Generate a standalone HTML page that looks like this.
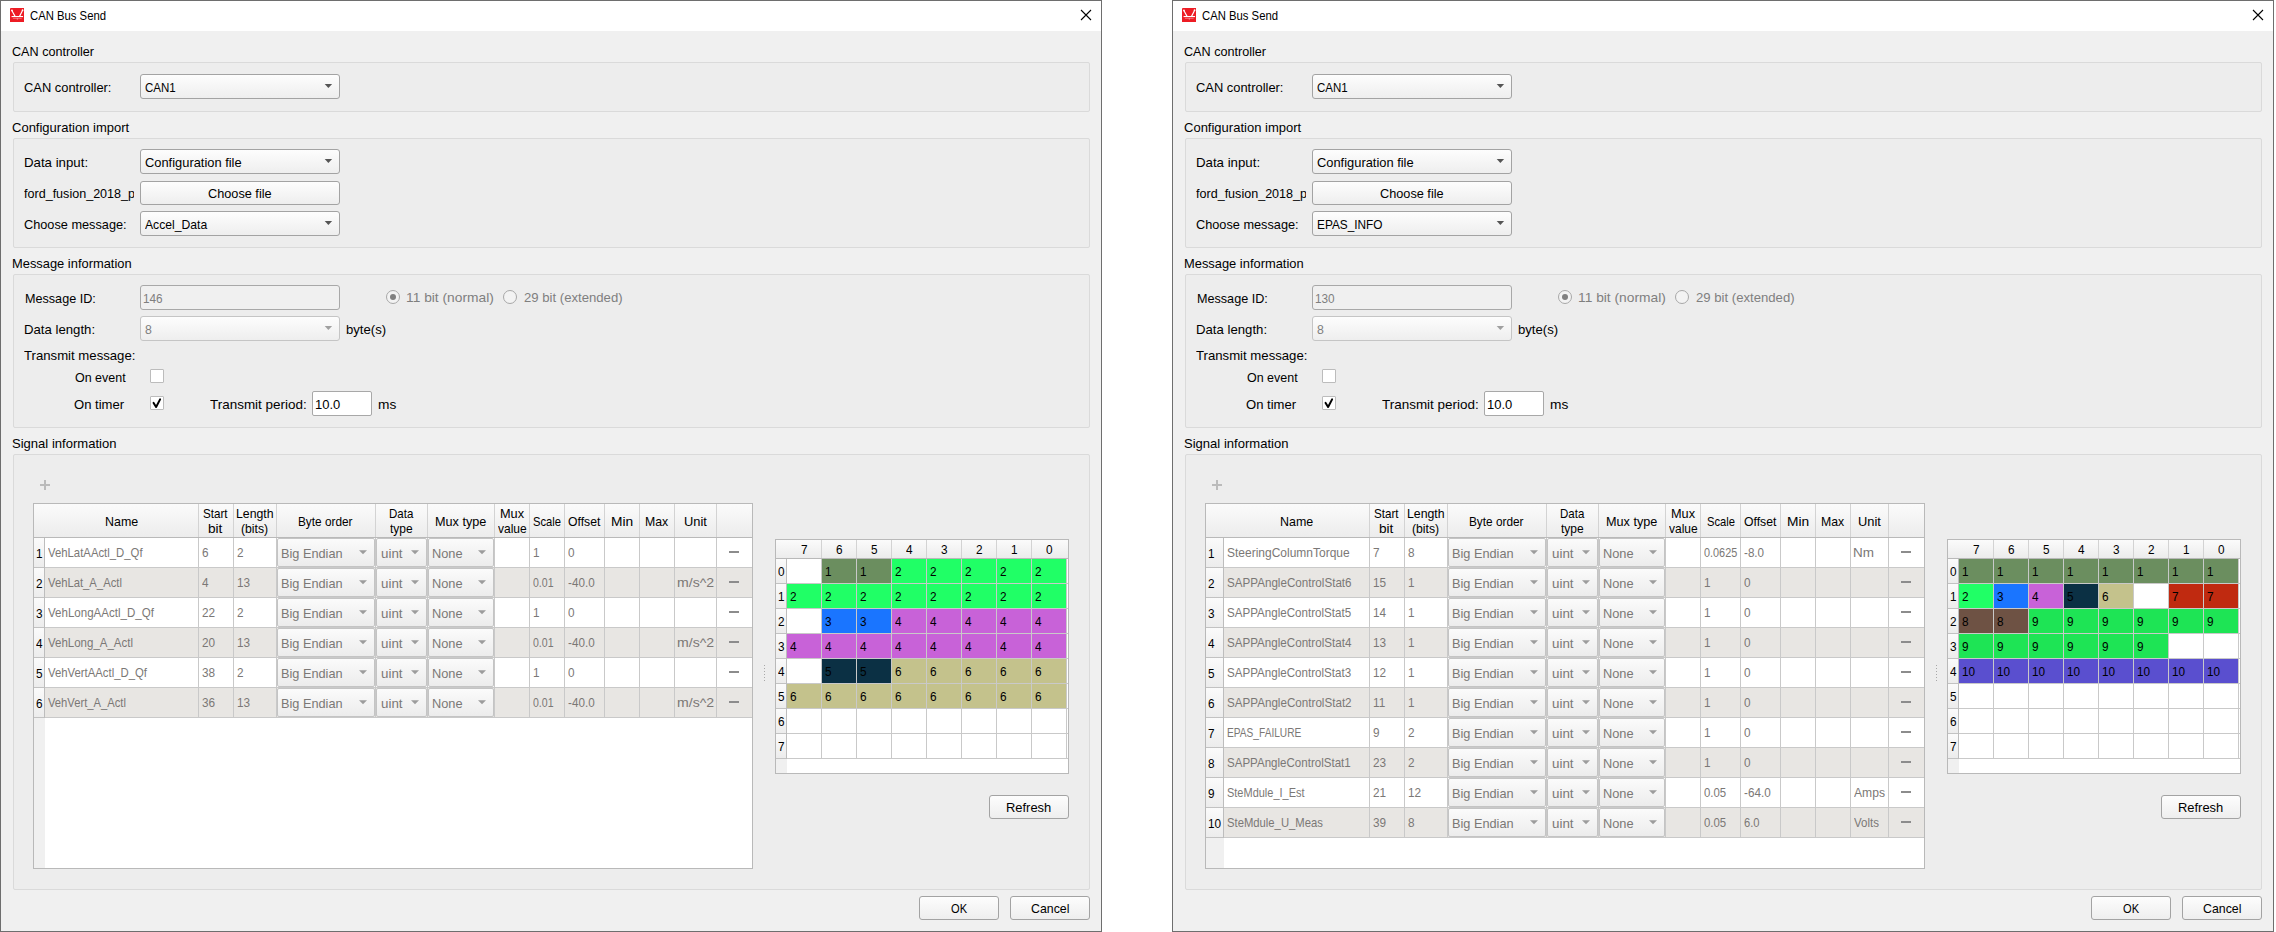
<!DOCTYPE html>
<html><head><meta charset="utf-8"><title>CAN Bus Send</title>
<style>
html,body{margin:0;padding:0;}
body{width:2276px;height:932px;position:relative;overflow:hidden;background:#ffffff;font-family:"Liberation Sans", sans-serif;}
.t{position:absolute;white-space:nowrap;line-height:20px;font-family:"Liberation Sans", sans-serif;transform-origin:0 0;}
</style></head><body>
<div style="position:absolute;left:0px;top:0px;width:1102px;height:932px;background:#6e6e6e"></div>
<div style="position:absolute;left:1px;top:1px;width:1100px;height:30px;background:#ffffff"></div>
<div style="position:absolute;left:1px;top:31px;width:1100px;height:900px;background:#f0f0f0"></div>
<svg style="position:absolute;left:9.5px;top:7.5px" width="14.6" height="14.6" viewBox="0 0 15 15"><rect x="0" y="0" width="15" height="15" rx="1" fill="#ed1c24"/><path d="M1.9 2.6 L5.2 8.6 M13.0 2.4 L9.8 8.6" stroke="#fff" stroke-width="1.2" fill="none"/><circle cx="2.0" cy="2.5" r="0.9" fill="#fff"/><circle cx="12.9" cy="2.3" r="0.9" fill="#fff"/><path d="M1.6 8.8 H13.4" stroke="#fff" stroke-width="1.1"/><path d="M3 10.6 H12 M7.5 10.4 V12.2" stroke="#fff" stroke-opacity="0.55" stroke-width="0.7"/></svg>
<div class="t" style="left:30.05px;top:6px;font-size:12.4px;color:#000;transform:scaleX(0.9122);">CAN Bus Send</div>
<svg style="position:absolute;left:1080px;top:9px" width="12" height="12" viewBox="0 0 12 12"><path d="M1 1 L11 11 M11 1 L1 11" stroke="#000" stroke-width="1.1" fill="none"/></svg>
<div style="position:absolute;left:13px;top:62px;width:1077px;height:50px;background:#ededed;border:1px solid #dadada;border-radius:2px;box-sizing:border-box"></div>
<div style="position:absolute;left:13px;top:138px;width:1077px;height:110px;background:#ededed;border:1px solid #dadada;border-radius:2px;box-sizing:border-box"></div>
<div style="position:absolute;left:13px;top:274px;width:1077px;height:154px;background:#ededed;border:1px solid #dadada;border-radius:2px;box-sizing:border-box"></div>
<div style="position:absolute;left:13px;top:454px;width:1077px;height:436px;background:#ededed;border:1px solid #dadada;border-radius:2px;box-sizing:border-box"></div>
<div class="t" style="left:12.01px;top:42px;font-size:12.7px;color:#000;transform:scaleX(0.9944);">CAN controller</div>
<div class="t" style="left:11.89px;top:118px;font-size:12.7px;color:#000;transform:scaleX(1.0254);">Configuration import</div>
<div class="t" style="left:11.63px;top:254px;font-size:12.7px;color:#000;transform:scaleX(1.0155);">Message information</div>
<div class="t" style="left:12.08px;top:434px;font-size:12.7px;color:#000;transform:scaleX(1.0284);">Signal information</div>
<div class="t" style="left:23.84px;top:78px;font-size:12.7px;color:#000;transform:scaleX(1.0166);">CAN controller:</div>
<div style="position:absolute;left:140px;top:74px;width:198px;height:23px;border:1px solid #a3a3a3;border-radius:3px;background:linear-gradient(#fdfdfd,#eeeeee)"></div>
<div class="t" style="left:144.81px;top:78px;font-size:12.7px;color:#000;transform:scaleX(0.9080);">CAN1</div>
<svg style="position:absolute;left:322px;top:80px" width="12" height="12"><polygon points="2.70,4.00 10.10,4.00 6.40,8.00" fill="#555555"/></svg>
<div class="t" style="left:23.90px;top:153px;font-size:12.7px;color:#000;transform:scaleX(1.0445);">Data input:</div>
<div style="position:absolute;left:140px;top:149px;width:198px;height:23px;border:1px solid #a3a3a3;border-radius:3px;background:linear-gradient(#fdfdfd,#eeeeee)"></div>
<div class="t" style="left:144.74px;top:153px;font-size:12.7px;color:#000;transform:scaleX(1.0149);">Configuration file</div>
<svg style="position:absolute;left:322px;top:155px" width="12" height="12"><polygon points="2.70,4.00 10.10,4.00 6.40,8.00" fill="#555555"/></svg>
<div style="position:absolute;left:24px;top:184px;width:109.6px;height:20px;overflow:hidden">
<div class="t" style="left:0.00px;top:0px;font-size:12.7px;color:#000;transform:scaleX(0.9900);">ford_fusion_2018_pt.dbc</div>
</div>
<div style="position:absolute;left:140px;top:181px;width:198px;height:22px;border:1px solid #a3a3a3;border-radius:3px;background:linear-gradient(#fdfdfd,#eeeeee)"></div>
<div class="t" style="left:207.85px;top:184px;font-size:12.7px;color:#000;transform:scaleX(1.0024);">Choose file</div>
<div class="t" style="left:23.95px;top:215px;font-size:12.7px;color:#000;transform:scaleX(1.0035);">Choose message:</div>
<div style="position:absolute;left:140px;top:211px;width:198px;height:23px;border:1px solid #a3a3a3;border-radius:3px;background:linear-gradient(#fdfdfd,#eeeeee)"></div>
<div class="t" style="left:145.35px;top:215px;font-size:12.7px;color:#000;transform:scaleX(0.9599);">Accel_Data</div>
<svg style="position:absolute;left:322px;top:217px" width="12" height="12"><polygon points="2.70,4.00 10.10,4.00 6.40,8.00" fill="#555555"/></svg>
<div class="t" style="left:24.96px;top:289px;font-size:12.7px;color:#000;transform:scaleX(0.9936);">Message ID:</div>
<div style="position:absolute;left:140px;top:285px;width:198px;height:23px;border:1px solid #a8a8a8;border-radius:3px;background:#f0f0f0"></div>
<div class="t" style="left:142.62px;top:289px;font-size:12.7px;color:#7f7f7f;transform:scaleX(0.9300);">146</div>
<div style="position:absolute;left:386px;top:290px;width:12px;height:12px;border:1px solid #a8a8a8;border-radius:50%;background:#f3f3f3"></div>
<div style="position:absolute;left:390px;top:294px;width:6px;height:6px;border-radius:50%;background:#808080"></div>
<div class="t" style="left:405.97px;top:288px;font-size:12.7px;color:#7f7f7f;transform:scaleX(1.0860);">11 bit (normal)</div>
<div style="position:absolute;left:503px;top:290px;width:12px;height:12px;border:1px solid #a8a8a8;border-radius:50%;background:#f3f3f3"></div>
<div class="t" style="left:524.13px;top:288px;font-size:12.7px;color:#7f7f7f;transform:scaleX(1.0351);">29 bit (extended)</div>
<div class="t" style="left:23.91px;top:320px;font-size:12.7px;color:#000;transform:scaleX(1.0389);">Data length:</div>
<div style="position:absolute;left:140px;top:316px;width:198px;height:23px;border:1px solid #c5c5c5;border-radius:3px;background:linear-gradient(#fdfdfd,#eeeeee)"></div>
<div class="t" style="left:144.87px;top:320px;font-size:12.7px;color:#7f7f7f;transform:scaleX(0.9700);">8</div>
<svg style="position:absolute;left:322px;top:322px" width="12" height="12"><polygon points="2.70,4.00 10.10,4.00 6.40,8.00" fill="#a0a0a0"/></svg>
<div class="t" style="left:346.37px;top:320px;font-size:12.7px;color:#000;transform:scaleX(1.0339);">byte(s)</div>
<div class="t" style="left:23.69px;top:346px;font-size:12.7px;color:#000;transform:scaleX(1.0372);">Transmit message:</div>
<div class="t" style="left:75.41px;top:368px;font-size:12.7px;color:#000;transform:scaleX(0.9833);">On event</div>
<div style="position:absolute;left:150px;top:369px;width:12px;height:12px;border:1px solid #bcbcbc;border-radius:1px;background:#fff"></div>
<div class="t" style="left:74.38px;top:395px;font-size:12.7px;color:#000;transform:scaleX(1.0303);">On timer</div>
<div style="position:absolute;left:150px;top:396px;width:12px;height:12px;border:1px solid #bcbcbc;border-radius:1px;background:#fff"></div>
<svg style="position:absolute;left:150px;top:396px" width="14" height="14" viewBox="0 0 14 14"><path d="M3.6 6.9 L6.1 11.0 L10.1 3.4" stroke="#000" stroke-width="2" stroke-linecap="round" stroke-linejoin="round" fill="none"/></svg>
<div class="t" style="left:209.68px;top:395px;font-size:12.7px;color:#000;transform:scaleX(1.0601);">Transmit period:</div>
<div style="position:absolute;left:312px;top:391px;width:58px;height:23px;border:1px solid #a8a8a8;border-radius:2px;background:#fff"></div>
<div class="t" style="left:314.63px;top:395px;font-size:12.7px;color:#000;transform:scaleX(1.0237);">10.0</div>
<div class="t" style="left:378.28px;top:395px;font-size:12.7px;color:#000;transform:scaleX(1.0799);">ms</div>
<div style="position:absolute;left:40px;top:484px;width:10px;height:2px;background:#bbbbbb"></div>
<div style="position:absolute;left:44px;top:480px;width:2px;height:10px;background:#bbbbbb"></div>
<div style="position:absolute;left:33px;top:503px;width:720px;height:366px;background:#fff;border:1px solid #b9b9b9;box-sizing:border-box"></div>
<div style="position:absolute;left:34px;top:538px;width:11px;height:330px;background:#f0f0f0"></div>
<div style="position:absolute;left:34px;top:504px;width:718px;height:33px;background:linear-gradient(#fbfbfb,#ececec)"></div>
<div style="position:absolute;left:34px;top:537px;width:718px;height:1px;background:#b9b9b9"></div>
<div style="position:absolute;left:198px;top:504px;width:1px;height:33px;background:#d3d3d3"></div>
<div style="position:absolute;left:233px;top:504px;width:1px;height:33px;background:#d3d3d3"></div>
<div style="position:absolute;left:276px;top:504px;width:1px;height:33px;background:#d3d3d3"></div>
<div style="position:absolute;left:375px;top:504px;width:1px;height:33px;background:#d3d3d3"></div>
<div style="position:absolute;left:427px;top:504px;width:1px;height:33px;background:#d3d3d3"></div>
<div style="position:absolute;left:494px;top:504px;width:1px;height:33px;background:#d3d3d3"></div>
<div style="position:absolute;left:529px;top:504px;width:1px;height:33px;background:#d3d3d3"></div>
<div style="position:absolute;left:564px;top:504px;width:1px;height:33px;background:#d3d3d3"></div>
<div style="position:absolute;left:604px;top:504px;width:1px;height:33px;background:#d3d3d3"></div>
<div style="position:absolute;left:639px;top:504px;width:1px;height:33px;background:#d3d3d3"></div>
<div style="position:absolute;left:674px;top:504px;width:1px;height:33px;background:#d3d3d3"></div>
<div style="position:absolute;left:716px;top:504px;width:1px;height:33px;background:#d3d3d3"></div>
<div class="t" style="left:104.65px;top:512px;font-size:12.4px;color:#000;transform:scaleX(1.0048);">Name</div>
<div class="t" style="left:203.48px;top:504px;font-size:12.4px;color:#000;transform:scaleX(0.9393);">Start</div>
<div class="t" style="left:208.42px;top:519px;font-size:12.4px;color:#000;transform:scaleX(1.0984);">bit</div>
<div class="t" style="left:236.06px;top:504px;font-size:12.4px;color:#000;transform:scaleX(0.9931);">Length</div>
<div class="t" style="left:241.41px;top:519px;font-size:12.4px;color:#000;transform:scaleX(0.9866);">(bits)</div>
<div class="t" style="left:298.35px;top:512px;font-size:12.4px;color:#000;transform:scaleX(0.9527);">Byte order</div>
<div class="t" style="left:388.87px;top:504px;font-size:12.4px;color:#000;transform:scaleX(0.9286);">Data</div>
<div class="t" style="left:390.31px;top:519px;font-size:12.4px;color:#000;transform:scaleX(0.9692);">type</div>
<div class="t" style="left:435.08px;top:512px;font-size:12.4px;color:#000;transform:scaleX(1.0215);">Mux type</div>
<div class="t" style="left:499.52px;top:504px;font-size:12.4px;color:#000;transform:scaleX(1.0269);">Mux</div>
<div class="t" style="left:497.90px;top:519px;font-size:12.4px;color:#000;transform:scaleX(0.9673);">value</div>
<div class="t" style="left:533.00px;top:512px;font-size:12.4px;color:#000;transform:scaleX(0.9030);">Scale</div>
<div class="t" style="left:568.06px;top:512px;font-size:12.4px;color:#000;transform:scaleX(0.9860);">Offset</div>
<div class="t" style="left:610.79px;top:512px;font-size:12.4px;color:#000;transform:scaleX(1.1099);">Min</div>
<div class="t" style="left:644.96px;top:512px;font-size:12.4px;color:#000;transform:scaleX(0.9910);">Max</div>
<div class="t" style="left:683.61px;top:512px;font-size:12.4px;color:#000;transform:scaleX(1.0381);">Unit</div>
<div style="position:absolute;left:45px;top:538px;width:707px;height:29px;background:#ffffff"></div>
<div style="position:absolute;left:34px;top:538px;width:10px;height:29px;background:linear-gradient(#fbfbfb,#ececec)"></div>
<div style="position:absolute;left:34px;top:567px;width:718px;height:1px;background:#c9c9c9"></div>
<div style="position:absolute;left:34px;top:567px;width:11px;height:1px;background:#c2c2c2"></div>
<div class="t" style="left:35.70px;top:544px;font-size:12.4px;color:#000;transform:scaleX(0.9500);">1</div>
<div class="t" style="left:48.15px;top:543px;font-size:12.4px;color:#7b7876;transform:scaleX(0.9153);">VehLatAActl_D_Qf</div>
<div class="t" style="left:201.83px;top:543px;font-size:12.4px;color:#7b7876;transform:scaleX(0.9500);">6</div>
<div class="t" style="left:236.83px;top:543px;font-size:12.4px;color:#7b7876;transform:scaleX(0.9500);">2</div>
<div style="position:absolute;left:277px;top:538px;width:96px;height:27px;border:1px solid #c4c4c4;border-radius:2px;background:linear-gradient(#fbfbfb,#ececec)"></div>
<div class="t" style="left:281.37px;top:544px;font-size:12.4px;color:#7b7876;transform:scaleX(1.0277);">Big Endian</div>
<svg style="position:absolute;left:357px;top:546px" width="12" height="12"><polygon points="2.00,4.30 10.00,4.30 6.00,8.30" fill="#9c9c9c"/></svg>
<div style="position:absolute;left:376px;top:538px;width:49px;height:27px;border:1px solid #c4c4c4;border-radius:2px;background:linear-gradient(#fbfbfb,#ececec)"></div>
<div class="t" style="left:380.54px;top:544px;font-size:12.4px;color:#7b7876;transform:scaleX(1.0785);">uint</div>
<svg style="position:absolute;left:409px;top:546px" width="12" height="12"><polygon points="2.00,4.30 10.00,4.30 6.00,8.30" fill="#9c9c9c"/></svg>
<div style="position:absolute;left:428px;top:538px;width:64px;height:27px;border:1px solid #c4c4c4;border-radius:2px;background:linear-gradient(#fbfbfb,#ececec)"></div>
<div class="t" style="left:432.37px;top:544px;font-size:12.4px;color:#7b7876;transform:scaleX(1.0333);">None</div>
<svg style="position:absolute;left:476px;top:546px" width="12" height="12"><polygon points="2.00,4.30 10.00,4.30 6.00,8.30" fill="#9c9c9c"/></svg>
<div class="t" style="left:532.50px;top:543px;font-size:12.4px;color:#7b7876;transform:scaleX(0.9500);">1</div>
<div class="t" style="left:567.92px;top:543px;font-size:12.4px;color:#7b7876;transform:scaleX(0.9500);">0</div>
<div style="position:absolute;left:729px;top:551px;width:10px;height:2px;background:#8c8c8c"></div>
<div style="position:absolute;left:45px;top:568px;width:707px;height:29px;background:#e8e6e3"></div>
<div style="position:absolute;left:34px;top:568px;width:10px;height:29px;background:linear-gradient(#fbfbfb,#ececec)"></div>
<div style="position:absolute;left:34px;top:597px;width:718px;height:1px;background:#c9c9c9"></div>
<div style="position:absolute;left:34px;top:597px;width:11px;height:1px;background:#c2c2c2"></div>
<div class="t" style="left:36.03px;top:574px;font-size:12.4px;color:#000;transform:scaleX(0.9500);">2</div>
<div class="t" style="left:48.15px;top:573px;font-size:12.4px;color:#7b7876;transform:scaleX(0.9093);">VehLat_A_Actl</div>
<div class="t" style="left:202.12px;top:573px;font-size:12.4px;color:#7b7876;transform:scaleX(0.9500);">4</div>
<div class="t" style="left:236.50px;top:573px;font-size:12.4px;color:#7b7876;transform:scaleX(0.9500);">13</div>
<div style="position:absolute;left:277px;top:568px;width:96px;height:27px;border:1px solid #c4c4c4;border-radius:2px;background:linear-gradient(#fbfbfb,#ececec)"></div>
<div class="t" style="left:281.37px;top:574px;font-size:12.4px;color:#7b7876;transform:scaleX(1.0277);">Big Endian</div>
<svg style="position:absolute;left:357px;top:576px" width="12" height="12"><polygon points="2.00,4.30 10.00,4.30 6.00,8.30" fill="#9c9c9c"/></svg>
<div style="position:absolute;left:376px;top:568px;width:49px;height:27px;border:1px solid #c4c4c4;border-radius:2px;background:linear-gradient(#fbfbfb,#ececec)"></div>
<div class="t" style="left:380.54px;top:574px;font-size:12.4px;color:#7b7876;transform:scaleX(1.0785);">uint</div>
<svg style="position:absolute;left:409px;top:576px" width="12" height="12"><polygon points="2.00,4.30 10.00,4.30 6.00,8.30" fill="#9c9c9c"/></svg>
<div style="position:absolute;left:428px;top:568px;width:64px;height:27px;border:1px solid #c4c4c4;border-radius:2px;background:linear-gradient(#fbfbfb,#ececec)"></div>
<div class="t" style="left:432.37px;top:574px;font-size:12.4px;color:#7b7876;transform:scaleX(1.0333);">None</div>
<svg style="position:absolute;left:476px;top:576px" width="12" height="12"><polygon points="2.00,4.30 10.00,4.30 6.00,8.30" fill="#9c9c9c"/></svg>
<div class="t" style="left:532.97px;top:573px;font-size:12.4px;color:#7b7876;transform:scaleX(0.8503);">0.01</div>
<div class="t" style="left:567.88px;top:573px;font-size:12.4px;color:#7b7876;transform:scaleX(0.9426);">-40.0</div>
<div class="t" style="left:677.49px;top:573px;font-size:12.4px;color:#7b7876;transform:scaleX(1.1379);">m/s^2</div>
<div style="position:absolute;left:729px;top:581px;width:10px;height:2px;background:#8c8c8c"></div>
<div style="position:absolute;left:45px;top:598px;width:707px;height:29px;background:#ffffff"></div>
<div style="position:absolute;left:34px;top:598px;width:10px;height:29px;background:linear-gradient(#fbfbfb,#ececec)"></div>
<div style="position:absolute;left:34px;top:627px;width:718px;height:1px;background:#c9c9c9"></div>
<div style="position:absolute;left:34px;top:627px;width:11px;height:1px;background:#c2c2c2"></div>
<div class="t" style="left:36.17px;top:604px;font-size:12.4px;color:#000;transform:scaleX(0.9500);">3</div>
<div class="t" style="left:48.15px;top:603px;font-size:12.4px;color:#7b7876;transform:scaleX(0.9315);">VehLongAActl_D_Qf</div>
<div class="t" style="left:201.83px;top:603px;font-size:12.4px;color:#7b7876;transform:scaleX(0.9500);">22</div>
<div class="t" style="left:236.83px;top:603px;font-size:12.4px;color:#7b7876;transform:scaleX(0.9500);">2</div>
<div style="position:absolute;left:277px;top:598px;width:96px;height:27px;border:1px solid #c4c4c4;border-radius:2px;background:linear-gradient(#fbfbfb,#ececec)"></div>
<div class="t" style="left:281.37px;top:604px;font-size:12.4px;color:#7b7876;transform:scaleX(1.0277);">Big Endian</div>
<svg style="position:absolute;left:357px;top:606px" width="12" height="12"><polygon points="2.00,4.30 10.00,4.30 6.00,8.30" fill="#9c9c9c"/></svg>
<div style="position:absolute;left:376px;top:598px;width:49px;height:27px;border:1px solid #c4c4c4;border-radius:2px;background:linear-gradient(#fbfbfb,#ececec)"></div>
<div class="t" style="left:380.54px;top:604px;font-size:12.4px;color:#7b7876;transform:scaleX(1.0785);">uint</div>
<svg style="position:absolute;left:409px;top:606px" width="12" height="12"><polygon points="2.00,4.30 10.00,4.30 6.00,8.30" fill="#9c9c9c"/></svg>
<div style="position:absolute;left:428px;top:598px;width:64px;height:27px;border:1px solid #c4c4c4;border-radius:2px;background:linear-gradient(#fbfbfb,#ececec)"></div>
<div class="t" style="left:432.37px;top:604px;font-size:12.4px;color:#7b7876;transform:scaleX(1.0333);">None</div>
<svg style="position:absolute;left:476px;top:606px" width="12" height="12"><polygon points="2.00,4.30 10.00,4.30 6.00,8.30" fill="#9c9c9c"/></svg>
<div class="t" style="left:532.50px;top:603px;font-size:12.4px;color:#7b7876;transform:scaleX(0.9500);">1</div>
<div class="t" style="left:567.92px;top:603px;font-size:12.4px;color:#7b7876;transform:scaleX(0.9500);">0</div>
<div style="position:absolute;left:729px;top:611px;width:10px;height:2px;background:#8c8c8c"></div>
<div style="position:absolute;left:45px;top:628px;width:707px;height:29px;background:#e8e6e3"></div>
<div style="position:absolute;left:34px;top:628px;width:10px;height:29px;background:linear-gradient(#fbfbfb,#ececec)"></div>
<div style="position:absolute;left:34px;top:657px;width:718px;height:1px;background:#c9c9c9"></div>
<div style="position:absolute;left:34px;top:657px;width:11px;height:1px;background:#c2c2c2"></div>
<div class="t" style="left:36.32px;top:634px;font-size:12.4px;color:#000;transform:scaleX(0.9500);">4</div>
<div class="t" style="left:48.15px;top:633px;font-size:12.4px;color:#7b7876;transform:scaleX(0.9279);">VehLong_A_Actl</div>
<div class="t" style="left:201.83px;top:633px;font-size:12.4px;color:#7b7876;transform:scaleX(0.9500);">20</div>
<div class="t" style="left:236.50px;top:633px;font-size:12.4px;color:#7b7876;transform:scaleX(0.9500);">13</div>
<div style="position:absolute;left:277px;top:628px;width:96px;height:27px;border:1px solid #c4c4c4;border-radius:2px;background:linear-gradient(#fbfbfb,#ececec)"></div>
<div class="t" style="left:281.37px;top:634px;font-size:12.4px;color:#7b7876;transform:scaleX(1.0277);">Big Endian</div>
<svg style="position:absolute;left:357px;top:636px" width="12" height="12"><polygon points="2.00,4.30 10.00,4.30 6.00,8.30" fill="#9c9c9c"/></svg>
<div style="position:absolute;left:376px;top:628px;width:49px;height:27px;border:1px solid #c4c4c4;border-radius:2px;background:linear-gradient(#fbfbfb,#ececec)"></div>
<div class="t" style="left:380.54px;top:634px;font-size:12.4px;color:#7b7876;transform:scaleX(1.0785);">uint</div>
<svg style="position:absolute;left:409px;top:636px" width="12" height="12"><polygon points="2.00,4.30 10.00,4.30 6.00,8.30" fill="#9c9c9c"/></svg>
<div style="position:absolute;left:428px;top:628px;width:64px;height:27px;border:1px solid #c4c4c4;border-radius:2px;background:linear-gradient(#fbfbfb,#ececec)"></div>
<div class="t" style="left:432.37px;top:634px;font-size:12.4px;color:#7b7876;transform:scaleX(1.0333);">None</div>
<svg style="position:absolute;left:476px;top:636px" width="12" height="12"><polygon points="2.00,4.30 10.00,4.30 6.00,8.30" fill="#9c9c9c"/></svg>
<div class="t" style="left:532.97px;top:633px;font-size:12.4px;color:#7b7876;transform:scaleX(0.8503);">0.01</div>
<div class="t" style="left:567.88px;top:633px;font-size:12.4px;color:#7b7876;transform:scaleX(0.9426);">-40.0</div>
<div class="t" style="left:677.49px;top:633px;font-size:12.4px;color:#7b7876;transform:scaleX(1.1379);">m/s^2</div>
<div style="position:absolute;left:729px;top:641px;width:10px;height:2px;background:#8c8c8c"></div>
<div style="position:absolute;left:45px;top:658px;width:707px;height:29px;background:#ffffff"></div>
<div style="position:absolute;left:34px;top:658px;width:10px;height:29px;background:linear-gradient(#fbfbfb,#ececec)"></div>
<div style="position:absolute;left:34px;top:687px;width:718px;height:1px;background:#c9c9c9"></div>
<div style="position:absolute;left:34px;top:687px;width:11px;height:1px;background:#c2c2c2"></div>
<div class="t" style="left:36.12px;top:664px;font-size:12.4px;color:#000;transform:scaleX(0.9500);">5</div>
<div class="t" style="left:48.15px;top:663px;font-size:12.4px;color:#7b7876;transform:scaleX(0.9155);">VehVertAActl_D_Qf</div>
<div class="t" style="left:201.97px;top:663px;font-size:12.4px;color:#7b7876;transform:scaleX(0.9500);">38</div>
<div class="t" style="left:236.83px;top:663px;font-size:12.4px;color:#7b7876;transform:scaleX(0.9500);">2</div>
<div style="position:absolute;left:277px;top:658px;width:96px;height:27px;border:1px solid #c4c4c4;border-radius:2px;background:linear-gradient(#fbfbfb,#ececec)"></div>
<div class="t" style="left:281.37px;top:664px;font-size:12.4px;color:#7b7876;transform:scaleX(1.0277);">Big Endian</div>
<svg style="position:absolute;left:357px;top:666px" width="12" height="12"><polygon points="2.00,4.30 10.00,4.30 6.00,8.30" fill="#9c9c9c"/></svg>
<div style="position:absolute;left:376px;top:658px;width:49px;height:27px;border:1px solid #c4c4c4;border-radius:2px;background:linear-gradient(#fbfbfb,#ececec)"></div>
<div class="t" style="left:380.54px;top:664px;font-size:12.4px;color:#7b7876;transform:scaleX(1.0785);">uint</div>
<svg style="position:absolute;left:409px;top:666px" width="12" height="12"><polygon points="2.00,4.30 10.00,4.30 6.00,8.30" fill="#9c9c9c"/></svg>
<div style="position:absolute;left:428px;top:658px;width:64px;height:27px;border:1px solid #c4c4c4;border-radius:2px;background:linear-gradient(#fbfbfb,#ececec)"></div>
<div class="t" style="left:432.37px;top:664px;font-size:12.4px;color:#7b7876;transform:scaleX(1.0333);">None</div>
<svg style="position:absolute;left:476px;top:666px" width="12" height="12"><polygon points="2.00,4.30 10.00,4.30 6.00,8.30" fill="#9c9c9c"/></svg>
<div class="t" style="left:532.50px;top:663px;font-size:12.4px;color:#7b7876;transform:scaleX(0.9500);">1</div>
<div class="t" style="left:567.92px;top:663px;font-size:12.4px;color:#7b7876;transform:scaleX(0.9500);">0</div>
<div style="position:absolute;left:729px;top:671px;width:10px;height:2px;background:#8c8c8c"></div>
<div style="position:absolute;left:45px;top:688px;width:707px;height:29px;background:#e8e6e3"></div>
<div style="position:absolute;left:34px;top:688px;width:10px;height:29px;background:linear-gradient(#fbfbfb,#ececec)"></div>
<div style="position:absolute;left:34px;top:717px;width:718px;height:1px;background:#c9c9c9"></div>
<div style="position:absolute;left:34px;top:717px;width:11px;height:1px;background:#c2c2c2"></div>
<div class="t" style="left:36.03px;top:694px;font-size:12.4px;color:#000;transform:scaleX(0.9500);">6</div>
<div class="t" style="left:48.15px;top:693px;font-size:12.4px;color:#7b7876;transform:scaleX(0.9050);">VehVert_A_Actl</div>
<div class="t" style="left:201.97px;top:693px;font-size:12.4px;color:#7b7876;transform:scaleX(0.9500);">36</div>
<div class="t" style="left:236.50px;top:693px;font-size:12.4px;color:#7b7876;transform:scaleX(0.9500);">13</div>
<div style="position:absolute;left:277px;top:688px;width:96px;height:27px;border:1px solid #c4c4c4;border-radius:2px;background:linear-gradient(#fbfbfb,#ececec)"></div>
<div class="t" style="left:281.37px;top:694px;font-size:12.4px;color:#7b7876;transform:scaleX(1.0277);">Big Endian</div>
<svg style="position:absolute;left:357px;top:696px" width="12" height="12"><polygon points="2.00,4.30 10.00,4.30 6.00,8.30" fill="#9c9c9c"/></svg>
<div style="position:absolute;left:376px;top:688px;width:49px;height:27px;border:1px solid #c4c4c4;border-radius:2px;background:linear-gradient(#fbfbfb,#ececec)"></div>
<div class="t" style="left:380.54px;top:694px;font-size:12.4px;color:#7b7876;transform:scaleX(1.0785);">uint</div>
<svg style="position:absolute;left:409px;top:696px" width="12" height="12"><polygon points="2.00,4.30 10.00,4.30 6.00,8.30" fill="#9c9c9c"/></svg>
<div style="position:absolute;left:428px;top:688px;width:64px;height:27px;border:1px solid #c4c4c4;border-radius:2px;background:linear-gradient(#fbfbfb,#ececec)"></div>
<div class="t" style="left:432.37px;top:694px;font-size:12.4px;color:#7b7876;transform:scaleX(1.0333);">None</div>
<svg style="position:absolute;left:476px;top:696px" width="12" height="12"><polygon points="2.00,4.30 10.00,4.30 6.00,8.30" fill="#9c9c9c"/></svg>
<div class="t" style="left:532.97px;top:693px;font-size:12.4px;color:#7b7876;transform:scaleX(0.8503);">0.01</div>
<div class="t" style="left:567.88px;top:693px;font-size:12.4px;color:#7b7876;transform:scaleX(0.9426);">-40.0</div>
<div class="t" style="left:677.49px;top:693px;font-size:12.4px;color:#7b7876;transform:scaleX(1.1379);">m/s^2</div>
<div style="position:absolute;left:729px;top:701px;width:10px;height:2px;background:#8c8c8c"></div>
<div style="position:absolute;left:44px;top:538px;width:1px;height:180px;background:#c9c9c9"></div>
<div style="position:absolute;left:198px;top:538px;width:1px;height:180px;background:#c9c9c9"></div>
<div style="position:absolute;left:233px;top:538px;width:1px;height:180px;background:#c9c9c9"></div>
<div style="position:absolute;left:276px;top:538px;width:1px;height:180px;background:#c9c9c9"></div>
<div style="position:absolute;left:375px;top:538px;width:1px;height:180px;background:#c9c9c9"></div>
<div style="position:absolute;left:427px;top:538px;width:1px;height:180px;background:#c9c9c9"></div>
<div style="position:absolute;left:494px;top:538px;width:1px;height:180px;background:#c9c9c9"></div>
<div style="position:absolute;left:529px;top:538px;width:1px;height:180px;background:#c9c9c9"></div>
<div style="position:absolute;left:564px;top:538px;width:1px;height:180px;background:#c9c9c9"></div>
<div style="position:absolute;left:604px;top:538px;width:1px;height:180px;background:#c9c9c9"></div>
<div style="position:absolute;left:639px;top:538px;width:1px;height:180px;background:#c9c9c9"></div>
<div style="position:absolute;left:674px;top:538px;width:1px;height:180px;background:#c9c9c9"></div>
<div style="position:absolute;left:716px;top:538px;width:1px;height:180px;background:#c9c9c9"></div>
<div style="position:absolute;left:44px;top:538px;width:1px;height:180px;background:#bdbdbd"></div>
<div style="position:absolute;left:764px;top:665px;width:1px;height:1px;background:#a8a8a8"></div>
<div style="position:absolute;left:764px;top:668px;width:1px;height:1px;background:#a8a8a8"></div>
<div style="position:absolute;left:764px;top:671px;width:1px;height:1px;background:#a8a8a8"></div>
<div style="position:absolute;left:764px;top:674px;width:1px;height:1px;background:#a8a8a8"></div>
<div style="position:absolute;left:764px;top:677px;width:1px;height:1px;background:#a8a8a8"></div>
<div style="position:absolute;left:764px;top:680px;width:1px;height:1px;background:#a8a8a8"></div>
<div style="position:absolute;left:775px;top:539px;width:294px;height:235px;background:#fff;border:1px solid #b9b9b9;box-sizing:border-box"></div>
<div style="position:absolute;left:776px;top:540px;width:292px;height:18px;background:linear-gradient(#fbfbfb,#ececec)"></div>
<div style="position:absolute;left:776px;top:558px;width:292px;height:1px;background:#b9b9b9"></div>
<div style="position:absolute;left:776px;top:559px;width:11px;height:214px;background:#f0f0f0"></div>
<div class="t" style="left:801.00px;top:540px;font-size:12.4px;color:#000;transform:scaleX(0.9500);">7</div>
<div style="position:absolute;left:821px;top:540px;width:1px;height:18px;background:#d3d3d3"></div>
<div class="t" style="left:836.00px;top:540px;font-size:12.4px;color:#000;transform:scaleX(0.9500);">6</div>
<div style="position:absolute;left:856px;top:540px;width:1px;height:18px;background:#d3d3d3"></div>
<div class="t" style="left:871.02px;top:540px;font-size:12.4px;color:#000;transform:scaleX(0.9500);">5</div>
<div style="position:absolute;left:891px;top:540px;width:1px;height:18px;background:#d3d3d3"></div>
<div class="t" style="left:906.05px;top:540px;font-size:12.4px;color:#000;transform:scaleX(0.9500);">4</div>
<div style="position:absolute;left:926px;top:540px;width:1px;height:18px;background:#d3d3d3"></div>
<div class="t" style="left:941.07px;top:540px;font-size:12.4px;color:#000;transform:scaleX(0.9500);">3</div>
<div style="position:absolute;left:961px;top:540px;width:1px;height:18px;background:#d3d3d3"></div>
<div class="t" style="left:976.02px;top:540px;font-size:12.4px;color:#000;transform:scaleX(0.9500);">2</div>
<div style="position:absolute;left:996px;top:540px;width:1px;height:18px;background:#d3d3d3"></div>
<div class="t" style="left:1010.86px;top:540px;font-size:12.4px;color:#000;transform:scaleX(0.9500);">1</div>
<div style="position:absolute;left:1031px;top:540px;width:1px;height:18px;background:#d3d3d3"></div>
<div class="t" style="left:1046.02px;top:540px;font-size:12.4px;color:#000;transform:scaleX(0.9500);">0</div>
<div style="position:absolute;left:776px;top:559px;width:10px;height:24px;background:linear-gradient(#fbfbfb,#ececec)"></div>
<div class="t" style="left:777.92px;top:562px;font-size:12.4px;color:#000;transform:scaleX(0.9500);">0</div>
<div style="position:absolute;left:822px;top:559px;width:34px;height:24px;background:#6b8e5f"></div>
<div class="t" style="left:824.70px;top:562px;font-size:12.4px;color:#000;transform:scaleX(0.9500);">1</div>
<div style="position:absolute;left:857px;top:559px;width:34px;height:24px;background:#6b8e5f"></div>
<div class="t" style="left:859.70px;top:562px;font-size:12.4px;color:#000;transform:scaleX(0.9500);">1</div>
<div style="position:absolute;left:892px;top:559px;width:34px;height:24px;background:#20ff66"></div>
<div class="t" style="left:895.03px;top:562px;font-size:12.4px;color:#000;transform:scaleX(0.9500);">2</div>
<div style="position:absolute;left:927px;top:559px;width:34px;height:24px;background:#20ff66"></div>
<div class="t" style="left:930.03px;top:562px;font-size:12.4px;color:#000;transform:scaleX(0.9500);">2</div>
<div style="position:absolute;left:962px;top:559px;width:34px;height:24px;background:#20ff66"></div>
<div class="t" style="left:965.03px;top:562px;font-size:12.4px;color:#000;transform:scaleX(0.9500);">2</div>
<div style="position:absolute;left:997px;top:559px;width:34px;height:24px;background:#20ff66"></div>
<div class="t" style="left:1000.03px;top:562px;font-size:12.4px;color:#000;transform:scaleX(0.9500);">2</div>
<div style="position:absolute;left:1032px;top:559px;width:34px;height:24px;background:#20ff66"></div>
<div class="t" style="left:1035.03px;top:562px;font-size:12.4px;color:#000;transform:scaleX(0.9500);">2</div>
<div style="position:absolute;left:776px;top:583px;width:292px;height:1px;background:#c9c9c9"></div>
<div style="position:absolute;left:776px;top:583px;width:11px;height:1px;background:#c2c2c2"></div>
<div style="position:absolute;left:776px;top:584px;width:10px;height:24px;background:linear-gradient(#fbfbfb,#ececec)"></div>
<div class="t" style="left:777.76px;top:587px;font-size:12.4px;color:#000;transform:scaleX(0.9500);">1</div>
<div style="position:absolute;left:787px;top:584px;width:34px;height:24px;background:#20ff66"></div>
<div class="t" style="left:790.03px;top:587px;font-size:12.4px;color:#000;transform:scaleX(0.9500);">2</div>
<div style="position:absolute;left:822px;top:584px;width:34px;height:24px;background:#20ff66"></div>
<div class="t" style="left:825.03px;top:587px;font-size:12.4px;color:#000;transform:scaleX(0.9500);">2</div>
<div style="position:absolute;left:857px;top:584px;width:34px;height:24px;background:#20ff66"></div>
<div class="t" style="left:860.03px;top:587px;font-size:12.4px;color:#000;transform:scaleX(0.9500);">2</div>
<div style="position:absolute;left:892px;top:584px;width:34px;height:24px;background:#20ff66"></div>
<div class="t" style="left:895.03px;top:587px;font-size:12.4px;color:#000;transform:scaleX(0.9500);">2</div>
<div style="position:absolute;left:927px;top:584px;width:34px;height:24px;background:#20ff66"></div>
<div class="t" style="left:930.03px;top:587px;font-size:12.4px;color:#000;transform:scaleX(0.9500);">2</div>
<div style="position:absolute;left:962px;top:584px;width:34px;height:24px;background:#20ff66"></div>
<div class="t" style="left:965.03px;top:587px;font-size:12.4px;color:#000;transform:scaleX(0.9500);">2</div>
<div style="position:absolute;left:997px;top:584px;width:34px;height:24px;background:#20ff66"></div>
<div class="t" style="left:1000.03px;top:587px;font-size:12.4px;color:#000;transform:scaleX(0.9500);">2</div>
<div style="position:absolute;left:1032px;top:584px;width:34px;height:24px;background:#20ff66"></div>
<div class="t" style="left:1035.03px;top:587px;font-size:12.4px;color:#000;transform:scaleX(0.9500);">2</div>
<div style="position:absolute;left:776px;top:608px;width:292px;height:1px;background:#c9c9c9"></div>
<div style="position:absolute;left:776px;top:608px;width:11px;height:1px;background:#c2c2c2"></div>
<div style="position:absolute;left:776px;top:609px;width:10px;height:24px;background:linear-gradient(#fbfbfb,#ececec)"></div>
<div class="t" style="left:777.92px;top:612px;font-size:12.4px;color:#000;transform:scaleX(0.9500);">2</div>
<div style="position:absolute;left:822px;top:609px;width:34px;height:24px;background:#1a75ff"></div>
<div class="t" style="left:825.17px;top:612px;font-size:12.4px;color:#000;transform:scaleX(0.9500);">3</div>
<div style="position:absolute;left:857px;top:609px;width:34px;height:24px;background:#1a75ff"></div>
<div class="t" style="left:860.17px;top:612px;font-size:12.4px;color:#000;transform:scaleX(0.9500);">3</div>
<div style="position:absolute;left:892px;top:609px;width:34px;height:24px;background:#c862d8"></div>
<div class="t" style="left:895.32px;top:612px;font-size:12.4px;color:#000;transform:scaleX(0.9500);">4</div>
<div style="position:absolute;left:927px;top:609px;width:34px;height:24px;background:#c862d8"></div>
<div class="t" style="left:930.32px;top:612px;font-size:12.4px;color:#000;transform:scaleX(0.9500);">4</div>
<div style="position:absolute;left:962px;top:609px;width:34px;height:24px;background:#c862d8"></div>
<div class="t" style="left:965.32px;top:612px;font-size:12.4px;color:#000;transform:scaleX(0.9500);">4</div>
<div style="position:absolute;left:997px;top:609px;width:34px;height:24px;background:#c862d8"></div>
<div class="t" style="left:1000.32px;top:612px;font-size:12.4px;color:#000;transform:scaleX(0.9500);">4</div>
<div style="position:absolute;left:1032px;top:609px;width:34px;height:24px;background:#c862d8"></div>
<div class="t" style="left:1035.31px;top:612px;font-size:12.4px;color:#000;transform:scaleX(0.9500);">4</div>
<div style="position:absolute;left:776px;top:633px;width:292px;height:1px;background:#c9c9c9"></div>
<div style="position:absolute;left:776px;top:633px;width:11px;height:1px;background:#c2c2c2"></div>
<div style="position:absolute;left:776px;top:634px;width:10px;height:24px;background:linear-gradient(#fbfbfb,#ececec)"></div>
<div class="t" style="left:777.97px;top:637px;font-size:12.4px;color:#000;transform:scaleX(0.9500);">3</div>
<div style="position:absolute;left:787px;top:634px;width:34px;height:24px;background:#c862d8"></div>
<div class="t" style="left:790.32px;top:637px;font-size:12.4px;color:#000;transform:scaleX(0.9500);">4</div>
<div style="position:absolute;left:822px;top:634px;width:34px;height:24px;background:#c862d8"></div>
<div class="t" style="left:825.32px;top:637px;font-size:12.4px;color:#000;transform:scaleX(0.9500);">4</div>
<div style="position:absolute;left:857px;top:634px;width:34px;height:24px;background:#c862d8"></div>
<div class="t" style="left:860.32px;top:637px;font-size:12.4px;color:#000;transform:scaleX(0.9500);">4</div>
<div style="position:absolute;left:892px;top:634px;width:34px;height:24px;background:#c862d8"></div>
<div class="t" style="left:895.32px;top:637px;font-size:12.4px;color:#000;transform:scaleX(0.9500);">4</div>
<div style="position:absolute;left:927px;top:634px;width:34px;height:24px;background:#c862d8"></div>
<div class="t" style="left:930.32px;top:637px;font-size:12.4px;color:#000;transform:scaleX(0.9500);">4</div>
<div style="position:absolute;left:962px;top:634px;width:34px;height:24px;background:#c862d8"></div>
<div class="t" style="left:965.32px;top:637px;font-size:12.4px;color:#000;transform:scaleX(0.9500);">4</div>
<div style="position:absolute;left:997px;top:634px;width:34px;height:24px;background:#c862d8"></div>
<div class="t" style="left:1000.32px;top:637px;font-size:12.4px;color:#000;transform:scaleX(0.9500);">4</div>
<div style="position:absolute;left:1032px;top:634px;width:34px;height:24px;background:#c862d8"></div>
<div class="t" style="left:1035.31px;top:637px;font-size:12.4px;color:#000;transform:scaleX(0.9500);">4</div>
<div style="position:absolute;left:776px;top:658px;width:292px;height:1px;background:#c9c9c9"></div>
<div style="position:absolute;left:776px;top:658px;width:11px;height:1px;background:#c2c2c2"></div>
<div style="position:absolute;left:776px;top:659px;width:10px;height:24px;background:linear-gradient(#fbfbfb,#ececec)"></div>
<div class="t" style="left:777.95px;top:662px;font-size:12.4px;color:#000;transform:scaleX(0.9500);">4</div>
<div style="position:absolute;left:822px;top:659px;width:34px;height:24px;background:#0b3044"></div>
<div class="t" style="left:825.12px;top:662px;font-size:12.4px;color:#000;transform:scaleX(0.9500);">5</div>
<div style="position:absolute;left:857px;top:659px;width:34px;height:24px;background:#0b3044"></div>
<div class="t" style="left:860.12px;top:662px;font-size:12.4px;color:#000;transform:scaleX(0.9500);">5</div>
<div style="position:absolute;left:892px;top:659px;width:34px;height:24px;background:#c4c28c"></div>
<div class="t" style="left:895.03px;top:662px;font-size:12.4px;color:#000;transform:scaleX(0.9500);">6</div>
<div style="position:absolute;left:927px;top:659px;width:34px;height:24px;background:#c4c28c"></div>
<div class="t" style="left:930.03px;top:662px;font-size:12.4px;color:#000;transform:scaleX(0.9500);">6</div>
<div style="position:absolute;left:962px;top:659px;width:34px;height:24px;background:#c4c28c"></div>
<div class="t" style="left:965.03px;top:662px;font-size:12.4px;color:#000;transform:scaleX(0.9500);">6</div>
<div style="position:absolute;left:997px;top:659px;width:34px;height:24px;background:#c4c28c"></div>
<div class="t" style="left:1000.03px;top:662px;font-size:12.4px;color:#000;transform:scaleX(0.9500);">6</div>
<div style="position:absolute;left:1032px;top:659px;width:34px;height:24px;background:#c4c28c"></div>
<div class="t" style="left:1035.03px;top:662px;font-size:12.4px;color:#000;transform:scaleX(0.9500);">6</div>
<div style="position:absolute;left:776px;top:683px;width:292px;height:1px;background:#c9c9c9"></div>
<div style="position:absolute;left:776px;top:683px;width:11px;height:1px;background:#c2c2c2"></div>
<div style="position:absolute;left:776px;top:684px;width:10px;height:24px;background:linear-gradient(#fbfbfb,#ececec)"></div>
<div class="t" style="left:777.92px;top:687px;font-size:12.4px;color:#000;transform:scaleX(0.9500);">5</div>
<div style="position:absolute;left:787px;top:684px;width:34px;height:24px;background:#c4c28c"></div>
<div class="t" style="left:790.03px;top:687px;font-size:12.4px;color:#000;transform:scaleX(0.9500);">6</div>
<div style="position:absolute;left:822px;top:684px;width:34px;height:24px;background:#c4c28c"></div>
<div class="t" style="left:825.03px;top:687px;font-size:12.4px;color:#000;transform:scaleX(0.9500);">6</div>
<div style="position:absolute;left:857px;top:684px;width:34px;height:24px;background:#c4c28c"></div>
<div class="t" style="left:860.03px;top:687px;font-size:12.4px;color:#000;transform:scaleX(0.9500);">6</div>
<div style="position:absolute;left:892px;top:684px;width:34px;height:24px;background:#c4c28c"></div>
<div class="t" style="left:895.03px;top:687px;font-size:12.4px;color:#000;transform:scaleX(0.9500);">6</div>
<div style="position:absolute;left:927px;top:684px;width:34px;height:24px;background:#c4c28c"></div>
<div class="t" style="left:930.03px;top:687px;font-size:12.4px;color:#000;transform:scaleX(0.9500);">6</div>
<div style="position:absolute;left:962px;top:684px;width:34px;height:24px;background:#c4c28c"></div>
<div class="t" style="left:965.03px;top:687px;font-size:12.4px;color:#000;transform:scaleX(0.9500);">6</div>
<div style="position:absolute;left:997px;top:684px;width:34px;height:24px;background:#c4c28c"></div>
<div class="t" style="left:1000.03px;top:687px;font-size:12.4px;color:#000;transform:scaleX(0.9500);">6</div>
<div style="position:absolute;left:1032px;top:684px;width:34px;height:24px;background:#c4c28c"></div>
<div class="t" style="left:1035.03px;top:687px;font-size:12.4px;color:#000;transform:scaleX(0.9500);">6</div>
<div style="position:absolute;left:776px;top:708px;width:292px;height:1px;background:#c9c9c9"></div>
<div style="position:absolute;left:776px;top:708px;width:11px;height:1px;background:#c2c2c2"></div>
<div style="position:absolute;left:776px;top:709px;width:10px;height:24px;background:linear-gradient(#fbfbfb,#ececec)"></div>
<div class="t" style="left:777.90px;top:712px;font-size:12.4px;color:#000;transform:scaleX(0.9500);">6</div>
<div style="position:absolute;left:776px;top:733px;width:292px;height:1px;background:#c9c9c9"></div>
<div style="position:absolute;left:776px;top:733px;width:11px;height:1px;background:#c2c2c2"></div>
<div style="position:absolute;left:776px;top:734px;width:10px;height:24px;background:linear-gradient(#fbfbfb,#ececec)"></div>
<div class="t" style="left:777.90px;top:737px;font-size:12.4px;color:#000;transform:scaleX(0.9500);">7</div>
<div style="position:absolute;left:776px;top:758px;width:292px;height:1px;background:#c9c9c9"></div>
<div style="position:absolute;left:776px;top:758px;width:11px;height:1px;background:#c2c2c2"></div>
<div style="position:absolute;left:786px;top:559px;width:1px;height:200px;background:#bdbdbd"></div>
<div style="position:absolute;left:821px;top:559px;width:1px;height:200px;background:#c9c9c9"></div>
<div style="position:absolute;left:856px;top:559px;width:1px;height:200px;background:#c9c9c9"></div>
<div style="position:absolute;left:891px;top:559px;width:1px;height:200px;background:#c9c9c9"></div>
<div style="position:absolute;left:926px;top:559px;width:1px;height:200px;background:#c9c9c9"></div>
<div style="position:absolute;left:961px;top:559px;width:1px;height:200px;background:#c9c9c9"></div>
<div style="position:absolute;left:996px;top:559px;width:1px;height:200px;background:#c9c9c9"></div>
<div style="position:absolute;left:1031px;top:559px;width:1px;height:200px;background:#c9c9c9"></div>
<div style="position:absolute;left:1066px;top:559px;width:1px;height:200px;background:#c9c9c9"></div>
<div style="position:absolute;left:989px;top:795px;width:78px;height:22px;border:1px solid #a3a3a3;border-radius:3px;background:linear-gradient(#fdfdfd,#eeeeee)"></div>
<div class="t" style="left:1006.13px;top:798px;font-size:12.7px;color:#000;transform:scaleX(1.0188);">Refresh</div>
<div style="position:absolute;left:919px;top:896px;width:78px;height:22px;border:1px solid #a3a3a3;border-radius:3px;background:linear-gradient(#fdfdfd,#eeeeee)"></div>
<div class="t" style="left:950.88px;top:899px;font-size:12.7px;color:#000;transform:scaleX(0.8750);">OK</div>
<div style="position:absolute;left:1010px;top:896px;width:78px;height:22px;border:1px solid #a3a3a3;border-radius:3px;background:linear-gradient(#fdfdfd,#eeeeee)"></div>
<div class="t" style="left:1030.77px;top:899px;font-size:12.7px;color:#000;transform:scaleX(0.9724);">Cancel</div>
<div style="position:absolute;left:1172px;top:0px;width:1102px;height:932px;background:#6e6e6e"></div>
<div style="position:absolute;left:1173px;top:1px;width:1100px;height:30px;background:#ffffff"></div>
<div style="position:absolute;left:1173px;top:31px;width:1100px;height:900px;background:#f0f0f0"></div>
<svg style="position:absolute;left:1181.5px;top:7.5px" width="14.6" height="14.6" viewBox="0 0 15 15"><rect x="0" y="0" width="15" height="15" rx="1" fill="#ed1c24"/><path d="M1.9 2.6 L5.2 8.6 M13.0 2.4 L9.8 8.6" stroke="#fff" stroke-width="1.2" fill="none"/><circle cx="2.0" cy="2.5" r="0.9" fill="#fff"/><circle cx="12.9" cy="2.3" r="0.9" fill="#fff"/><path d="M1.6 8.8 H13.4" stroke="#fff" stroke-width="1.1"/><path d="M3 10.6 H12 M7.5 10.4 V12.2" stroke="#fff" stroke-opacity="0.55" stroke-width="0.7"/></svg>
<div class="t" style="left:1202.05px;top:6px;font-size:12.4px;color:#000;transform:scaleX(0.9122);">CAN Bus Send</div>
<svg style="position:absolute;left:2252px;top:9px" width="12" height="12" viewBox="0 0 12 12"><path d="M1 1 L11 11 M11 1 L1 11" stroke="#000" stroke-width="1.1" fill="none"/></svg>
<div style="position:absolute;left:1185px;top:62px;width:1077px;height:50px;background:#ededed;border:1px solid #dadada;border-radius:2px;box-sizing:border-box"></div>
<div style="position:absolute;left:1185px;top:138px;width:1077px;height:110px;background:#ededed;border:1px solid #dadada;border-radius:2px;box-sizing:border-box"></div>
<div style="position:absolute;left:1185px;top:274px;width:1077px;height:154px;background:#ededed;border:1px solid #dadada;border-radius:2px;box-sizing:border-box"></div>
<div style="position:absolute;left:1185px;top:454px;width:1077px;height:436px;background:#ededed;border:1px solid #dadada;border-radius:2px;box-sizing:border-box"></div>
<div class="t" style="left:1184.01px;top:42px;font-size:12.7px;color:#000;transform:scaleX(0.9944);">CAN controller</div>
<div class="t" style="left:1183.89px;top:118px;font-size:12.7px;color:#000;transform:scaleX(1.0254);">Configuration import</div>
<div class="t" style="left:1183.63px;top:254px;font-size:12.7px;color:#000;transform:scaleX(1.0155);">Message information</div>
<div class="t" style="left:1184.08px;top:434px;font-size:12.7px;color:#000;transform:scaleX(1.0284);">Signal information</div>
<div class="t" style="left:1195.84px;top:78px;font-size:12.7px;color:#000;transform:scaleX(1.0166);">CAN controller:</div>
<div style="position:absolute;left:1312px;top:74px;width:198px;height:23px;border:1px solid #a3a3a3;border-radius:3px;background:linear-gradient(#fdfdfd,#eeeeee)"></div>
<div class="t" style="left:1316.81px;top:78px;font-size:12.7px;color:#000;transform:scaleX(0.9080);">CAN1</div>
<svg style="position:absolute;left:1494px;top:80px" width="12" height="12"><polygon points="2.70,4.00 10.10,4.00 6.40,8.00" fill="#555555"/></svg>
<div class="t" style="left:1195.90px;top:153px;font-size:12.7px;color:#000;transform:scaleX(1.0445);">Data input:</div>
<div style="position:absolute;left:1312px;top:149px;width:198px;height:23px;border:1px solid #a3a3a3;border-radius:3px;background:linear-gradient(#fdfdfd,#eeeeee)"></div>
<div class="t" style="left:1316.74px;top:153px;font-size:12.7px;color:#000;transform:scaleX(1.0149);">Configuration file</div>
<svg style="position:absolute;left:1494px;top:155px" width="12" height="12"><polygon points="2.70,4.00 10.10,4.00 6.40,8.00" fill="#555555"/></svg>
<div style="position:absolute;left:1196px;top:184px;width:109.6px;height:20px;overflow:hidden">
<div class="t" style="left:0.00px;top:0px;font-size:12.7px;color:#000;transform:scaleX(0.9900);">ford_fusion_2018_pt.dbc</div>
</div>
<div style="position:absolute;left:1312px;top:181px;width:198px;height:22px;border:1px solid #a3a3a3;border-radius:3px;background:linear-gradient(#fdfdfd,#eeeeee)"></div>
<div class="t" style="left:1379.85px;top:184px;font-size:12.7px;color:#000;transform:scaleX(1.0024);">Choose file</div>
<div class="t" style="left:1195.95px;top:215px;font-size:12.7px;color:#000;transform:scaleX(1.0035);">Choose message:</div>
<div style="position:absolute;left:1312px;top:211px;width:198px;height:23px;border:1px solid #a3a3a3;border-radius:3px;background:linear-gradient(#fdfdfd,#eeeeee)"></div>
<div class="t" style="left:1317.42px;top:215px;font-size:12.7px;color:#000;transform:scaleX(0.9330);">EPAS_INFO</div>
<svg style="position:absolute;left:1494px;top:217px" width="12" height="12"><polygon points="2.70,4.00 10.10,4.00 6.40,8.00" fill="#555555"/></svg>
<div class="t" style="left:1196.96px;top:289px;font-size:12.7px;color:#000;transform:scaleX(0.9936);">Message ID:</div>
<div style="position:absolute;left:1312px;top:285px;width:198px;height:23px;border:1px solid #a8a8a8;border-radius:3px;background:#f0f0f0"></div>
<div class="t" style="left:1314.62px;top:289px;font-size:12.7px;color:#7f7f7f;transform:scaleX(0.9300);">130</div>
<div style="position:absolute;left:1558px;top:290px;width:12px;height:12px;border:1px solid #a8a8a8;border-radius:50%;background:#f3f3f3"></div>
<div style="position:absolute;left:1562px;top:294px;width:6px;height:6px;border-radius:50%;background:#808080"></div>
<div class="t" style="left:1577.97px;top:288px;font-size:12.7px;color:#7f7f7f;transform:scaleX(1.0860);">11 bit (normal)</div>
<div style="position:absolute;left:1675px;top:290px;width:12px;height:12px;border:1px solid #a8a8a8;border-radius:50%;background:#f3f3f3"></div>
<div class="t" style="left:1696.13px;top:288px;font-size:12.7px;color:#7f7f7f;transform:scaleX(1.0351);">29 bit (extended)</div>
<div class="t" style="left:1195.91px;top:320px;font-size:12.7px;color:#000;transform:scaleX(1.0389);">Data length:</div>
<div style="position:absolute;left:1312px;top:316px;width:198px;height:23px;border:1px solid #c5c5c5;border-radius:3px;background:linear-gradient(#fdfdfd,#eeeeee)"></div>
<div class="t" style="left:1316.87px;top:320px;font-size:12.7px;color:#7f7f7f;transform:scaleX(0.9700);">8</div>
<svg style="position:absolute;left:1494px;top:322px" width="12" height="12"><polygon points="2.70,4.00 10.10,4.00 6.40,8.00" fill="#a0a0a0"/></svg>
<div class="t" style="left:1518.37px;top:320px;font-size:12.7px;color:#000;transform:scaleX(1.0339);">byte(s)</div>
<div class="t" style="left:1195.69px;top:346px;font-size:12.7px;color:#000;transform:scaleX(1.0372);">Transmit message:</div>
<div class="t" style="left:1247.41px;top:368px;font-size:12.7px;color:#000;transform:scaleX(0.9833);">On event</div>
<div style="position:absolute;left:1322px;top:369px;width:12px;height:12px;border:1px solid #bcbcbc;border-radius:1px;background:#fff"></div>
<div class="t" style="left:1246.38px;top:395px;font-size:12.7px;color:#000;transform:scaleX(1.0303);">On timer</div>
<div style="position:absolute;left:1322px;top:396px;width:12px;height:12px;border:1px solid #bcbcbc;border-radius:1px;background:#fff"></div>
<svg style="position:absolute;left:1322px;top:396px" width="14" height="14" viewBox="0 0 14 14"><path d="M3.6 6.9 L6.1 11.0 L10.1 3.4" stroke="#000" stroke-width="2" stroke-linecap="round" stroke-linejoin="round" fill="none"/></svg>
<div class="t" style="left:1381.68px;top:395px;font-size:12.7px;color:#000;transform:scaleX(1.0601);">Transmit period:</div>
<div style="position:absolute;left:1484px;top:391px;width:58px;height:23px;border:1px solid #a8a8a8;border-radius:2px;background:#fff"></div>
<div class="t" style="left:1486.63px;top:395px;font-size:12.7px;color:#000;transform:scaleX(1.0237);">10.0</div>
<div class="t" style="left:1550.28px;top:395px;font-size:12.7px;color:#000;transform:scaleX(1.0799);">ms</div>
<div style="position:absolute;left:1212px;top:484px;width:10px;height:2px;background:#bbbbbb"></div>
<div style="position:absolute;left:1216px;top:480px;width:2px;height:10px;background:#bbbbbb"></div>
<div style="position:absolute;left:1205px;top:503px;width:720px;height:366px;background:#fff;border:1px solid #b9b9b9;box-sizing:border-box"></div>
<div style="position:absolute;left:1206px;top:538px;width:18px;height:330px;background:#f0f0f0"></div>
<div style="position:absolute;left:1206px;top:504px;width:718px;height:33px;background:linear-gradient(#fbfbfb,#ececec)"></div>
<div style="position:absolute;left:1206px;top:537px;width:718px;height:1px;background:#b9b9b9"></div>
<div style="position:absolute;left:1369px;top:504px;width:1px;height:33px;background:#d3d3d3"></div>
<div style="position:absolute;left:1404px;top:504px;width:1px;height:33px;background:#d3d3d3"></div>
<div style="position:absolute;left:1447px;top:504px;width:1px;height:33px;background:#d3d3d3"></div>
<div style="position:absolute;left:1546px;top:504px;width:1px;height:33px;background:#d3d3d3"></div>
<div style="position:absolute;left:1598px;top:504px;width:1px;height:33px;background:#d3d3d3"></div>
<div style="position:absolute;left:1665px;top:504px;width:1px;height:33px;background:#d3d3d3"></div>
<div style="position:absolute;left:1700px;top:504px;width:1px;height:33px;background:#d3d3d3"></div>
<div style="position:absolute;left:1740px;top:504px;width:1px;height:33px;background:#d3d3d3"></div>
<div style="position:absolute;left:1780px;top:504px;width:1px;height:33px;background:#d3d3d3"></div>
<div style="position:absolute;left:1815px;top:504px;width:1px;height:33px;background:#d3d3d3"></div>
<div style="position:absolute;left:1850px;top:504px;width:1px;height:33px;background:#d3d3d3"></div>
<div style="position:absolute;left:1888px;top:504px;width:1px;height:33px;background:#d3d3d3"></div>
<div class="t" style="left:1279.65px;top:512px;font-size:12.4px;color:#000;transform:scaleX(1.0048);">Name</div>
<div class="t" style="left:1374.48px;top:504px;font-size:12.4px;color:#000;transform:scaleX(0.9393);">Start</div>
<div class="t" style="left:1379.42px;top:519px;font-size:12.4px;color:#000;transform:scaleX(1.0984);">bit</div>
<div class="t" style="left:1407.06px;top:504px;font-size:12.4px;color:#000;transform:scaleX(0.9931);">Length</div>
<div class="t" style="left:1412.41px;top:519px;font-size:12.4px;color:#000;transform:scaleX(0.9866);">(bits)</div>
<div class="t" style="left:1469.35px;top:512px;font-size:12.4px;color:#000;transform:scaleX(0.9527);">Byte order</div>
<div class="t" style="left:1559.87px;top:504px;font-size:12.4px;color:#000;transform:scaleX(0.9286);">Data</div>
<div class="t" style="left:1561.31px;top:519px;font-size:12.4px;color:#000;transform:scaleX(0.9692);">type</div>
<div class="t" style="left:1606.08px;top:512px;font-size:12.4px;color:#000;transform:scaleX(1.0215);">Mux type</div>
<div class="t" style="left:1670.52px;top:504px;font-size:12.4px;color:#000;transform:scaleX(1.0269);">Mux</div>
<div class="t" style="left:1668.90px;top:519px;font-size:12.4px;color:#000;transform:scaleX(0.9673);">value</div>
<div class="t" style="left:1706.50px;top:512px;font-size:12.4px;color:#000;transform:scaleX(0.9030);">Scale</div>
<div class="t" style="left:1744.06px;top:512px;font-size:12.4px;color:#000;transform:scaleX(0.9860);">Offset</div>
<div class="t" style="left:1786.79px;top:512px;font-size:12.4px;color:#000;transform:scaleX(1.1099);">Min</div>
<div class="t" style="left:1820.96px;top:512px;font-size:12.4px;color:#000;transform:scaleX(0.9910);">Max</div>
<div class="t" style="left:1857.61px;top:512px;font-size:12.4px;color:#000;transform:scaleX(1.0381);">Unit</div>
<div style="position:absolute;left:1224px;top:538px;width:700px;height:29px;background:#ffffff"></div>
<div style="position:absolute;left:1206px;top:538px;width:17px;height:29px;background:linear-gradient(#fbfbfb,#ececec)"></div>
<div style="position:absolute;left:1206px;top:567px;width:718px;height:1px;background:#c9c9c9"></div>
<div style="position:absolute;left:1206px;top:567px;width:18px;height:1px;background:#c2c2c2"></div>
<div class="t" style="left:1207.70px;top:544px;font-size:12.4px;color:#000;transform:scaleX(0.9500);">1</div>
<div class="t" style="left:1226.67px;top:543px;font-size:12.4px;color:#7b7876;transform:scaleX(0.9679);">SteeringColumnTorque</div>
<div class="t" style="left:1372.78px;top:543px;font-size:12.4px;color:#7b7876;transform:scaleX(0.9500);">7</div>
<div class="t" style="left:1407.88px;top:543px;font-size:12.4px;color:#7b7876;transform:scaleX(0.9500);">8</div>
<div style="position:absolute;left:1448px;top:538px;width:96px;height:27px;border:1px solid #c4c4c4;border-radius:2px;background:linear-gradient(#fbfbfb,#ececec)"></div>
<div class="t" style="left:1452.37px;top:544px;font-size:12.4px;color:#7b7876;transform:scaleX(1.0277);">Big Endian</div>
<svg style="position:absolute;left:1528px;top:546px" width="12" height="12"><polygon points="2.00,4.30 10.00,4.30 6.00,8.30" fill="#9c9c9c"/></svg>
<div style="position:absolute;left:1547px;top:538px;width:49px;height:27px;border:1px solid #c4c4c4;border-radius:2px;background:linear-gradient(#fbfbfb,#ececec)"></div>
<div class="t" style="left:1551.54px;top:544px;font-size:12.4px;color:#7b7876;transform:scaleX(1.0785);">uint</div>
<svg style="position:absolute;left:1580px;top:546px" width="12" height="12"><polygon points="2.00,4.30 10.00,4.30 6.00,8.30" fill="#9c9c9c"/></svg>
<div style="position:absolute;left:1599px;top:538px;width:64px;height:27px;border:1px solid #c4c4c4;border-radius:2px;background:linear-gradient(#fbfbfb,#ececec)"></div>
<div class="t" style="left:1603.37px;top:544px;font-size:12.4px;color:#7b7876;transform:scaleX(1.0333);">None</div>
<svg style="position:absolute;left:1647px;top:546px" width="12" height="12"><polygon points="2.00,4.30 10.00,4.30 6.00,8.30" fill="#9c9c9c"/></svg>
<div class="t" style="left:1703.96px;top:543px;font-size:12.4px;color:#7b7876;transform:scaleX(0.8769);">0.0625</div>
<div class="t" style="left:1743.88px;top:543px;font-size:12.4px;color:#7b7876;transform:scaleX(0.9409);">-8.0</div>
<div class="t" style="left:1853.31px;top:543px;font-size:12.4px;color:#7b7876;transform:scaleX(1.0888);">Nm</div>
<div style="position:absolute;left:1901px;top:551px;width:10px;height:2px;background:#8c8c8c"></div>
<div style="position:absolute;left:1224px;top:568px;width:700px;height:29px;background:#e8e6e3"></div>
<div style="position:absolute;left:1206px;top:568px;width:17px;height:29px;background:linear-gradient(#fbfbfb,#ececec)"></div>
<div style="position:absolute;left:1206px;top:597px;width:718px;height:1px;background:#c9c9c9"></div>
<div style="position:absolute;left:1206px;top:597px;width:18px;height:1px;background:#c2c2c2"></div>
<div class="t" style="left:1208.03px;top:574px;font-size:12.4px;color:#000;transform:scaleX(0.9500);">2</div>
<div class="t" style="left:1226.68px;top:573px;font-size:12.4px;color:#7b7876;transform:scaleX(0.9385);">SAPPAngleControlStat6</div>
<div class="t" style="left:1372.50px;top:573px;font-size:12.4px;color:#7b7876;transform:scaleX(0.9500);">15</div>
<div class="t" style="left:1407.50px;top:573px;font-size:12.4px;color:#7b7876;transform:scaleX(0.9500);">1</div>
<div style="position:absolute;left:1448px;top:568px;width:96px;height:27px;border:1px solid #c4c4c4;border-radius:2px;background:linear-gradient(#fbfbfb,#ececec)"></div>
<div class="t" style="left:1452.37px;top:574px;font-size:12.4px;color:#7b7876;transform:scaleX(1.0277);">Big Endian</div>
<svg style="position:absolute;left:1528px;top:576px" width="12" height="12"><polygon points="2.00,4.30 10.00,4.30 6.00,8.30" fill="#9c9c9c"/></svg>
<div style="position:absolute;left:1547px;top:568px;width:49px;height:27px;border:1px solid #c4c4c4;border-radius:2px;background:linear-gradient(#fbfbfb,#ececec)"></div>
<div class="t" style="left:1551.54px;top:574px;font-size:12.4px;color:#7b7876;transform:scaleX(1.0785);">uint</div>
<svg style="position:absolute;left:1580px;top:576px" width="12" height="12"><polygon points="2.00,4.30 10.00,4.30 6.00,8.30" fill="#9c9c9c"/></svg>
<div style="position:absolute;left:1599px;top:568px;width:64px;height:27px;border:1px solid #c4c4c4;border-radius:2px;background:linear-gradient(#fbfbfb,#ececec)"></div>
<div class="t" style="left:1603.37px;top:574px;font-size:12.4px;color:#7b7876;transform:scaleX(1.0333);">None</div>
<svg style="position:absolute;left:1647px;top:576px" width="12" height="12"><polygon points="2.00,4.30 10.00,4.30 6.00,8.30" fill="#9c9c9c"/></svg>
<div class="t" style="left:1703.50px;top:573px;font-size:12.4px;color:#7b7876;transform:scaleX(0.9500);">1</div>
<div class="t" style="left:1743.93px;top:573px;font-size:12.4px;color:#7b7876;transform:scaleX(0.9500);">0</div>
<div style="position:absolute;left:1901px;top:581px;width:10px;height:2px;background:#8c8c8c"></div>
<div style="position:absolute;left:1224px;top:598px;width:700px;height:29px;background:#ffffff"></div>
<div style="position:absolute;left:1206px;top:598px;width:17px;height:29px;background:linear-gradient(#fbfbfb,#ececec)"></div>
<div style="position:absolute;left:1206px;top:627px;width:718px;height:1px;background:#c9c9c9"></div>
<div style="position:absolute;left:1206px;top:627px;width:18px;height:1px;background:#c2c2c2"></div>
<div class="t" style="left:1208.17px;top:604px;font-size:12.4px;color:#000;transform:scaleX(0.9500);">3</div>
<div class="t" style="left:1226.69px;top:603px;font-size:12.4px;color:#7b7876;transform:scaleX(0.9351);">SAPPAngleControlStat5</div>
<div class="t" style="left:1372.50px;top:603px;font-size:12.4px;color:#7b7876;transform:scaleX(0.9500);">14</div>
<div class="t" style="left:1407.50px;top:603px;font-size:12.4px;color:#7b7876;transform:scaleX(0.9500);">1</div>
<div style="position:absolute;left:1448px;top:598px;width:96px;height:27px;border:1px solid #c4c4c4;border-radius:2px;background:linear-gradient(#fbfbfb,#ececec)"></div>
<div class="t" style="left:1452.37px;top:604px;font-size:12.4px;color:#7b7876;transform:scaleX(1.0277);">Big Endian</div>
<svg style="position:absolute;left:1528px;top:606px" width="12" height="12"><polygon points="2.00,4.30 10.00,4.30 6.00,8.30" fill="#9c9c9c"/></svg>
<div style="position:absolute;left:1547px;top:598px;width:49px;height:27px;border:1px solid #c4c4c4;border-radius:2px;background:linear-gradient(#fbfbfb,#ececec)"></div>
<div class="t" style="left:1551.54px;top:604px;font-size:12.4px;color:#7b7876;transform:scaleX(1.0785);">uint</div>
<svg style="position:absolute;left:1580px;top:606px" width="12" height="12"><polygon points="2.00,4.30 10.00,4.30 6.00,8.30" fill="#9c9c9c"/></svg>
<div style="position:absolute;left:1599px;top:598px;width:64px;height:27px;border:1px solid #c4c4c4;border-radius:2px;background:linear-gradient(#fbfbfb,#ececec)"></div>
<div class="t" style="left:1603.37px;top:604px;font-size:12.4px;color:#7b7876;transform:scaleX(1.0333);">None</div>
<svg style="position:absolute;left:1647px;top:606px" width="12" height="12"><polygon points="2.00,4.30 10.00,4.30 6.00,8.30" fill="#9c9c9c"/></svg>
<div class="t" style="left:1703.50px;top:603px;font-size:12.4px;color:#7b7876;transform:scaleX(0.9500);">1</div>
<div class="t" style="left:1743.93px;top:603px;font-size:12.4px;color:#7b7876;transform:scaleX(0.9500);">0</div>
<div style="position:absolute;left:1901px;top:611px;width:10px;height:2px;background:#8c8c8c"></div>
<div style="position:absolute;left:1224px;top:628px;width:700px;height:29px;background:#e8e6e3"></div>
<div style="position:absolute;left:1206px;top:628px;width:17px;height:29px;background:linear-gradient(#fbfbfb,#ececec)"></div>
<div style="position:absolute;left:1206px;top:657px;width:718px;height:1px;background:#c9c9c9"></div>
<div style="position:absolute;left:1206px;top:657px;width:18px;height:1px;background:#c2c2c2"></div>
<div class="t" style="left:1208.31px;top:634px;font-size:12.4px;color:#000;transform:scaleX(0.9500);">4</div>
<div class="t" style="left:1226.68px;top:633px;font-size:12.4px;color:#7b7876;transform:scaleX(0.9371);">SAPPAngleControlStat4</div>
<div class="t" style="left:1372.50px;top:633px;font-size:12.4px;color:#7b7876;transform:scaleX(0.9500);">13</div>
<div class="t" style="left:1407.50px;top:633px;font-size:12.4px;color:#7b7876;transform:scaleX(0.9500);">1</div>
<div style="position:absolute;left:1448px;top:628px;width:96px;height:27px;border:1px solid #c4c4c4;border-radius:2px;background:linear-gradient(#fbfbfb,#ececec)"></div>
<div class="t" style="left:1452.37px;top:634px;font-size:12.4px;color:#7b7876;transform:scaleX(1.0277);">Big Endian</div>
<svg style="position:absolute;left:1528px;top:636px" width="12" height="12"><polygon points="2.00,4.30 10.00,4.30 6.00,8.30" fill="#9c9c9c"/></svg>
<div style="position:absolute;left:1547px;top:628px;width:49px;height:27px;border:1px solid #c4c4c4;border-radius:2px;background:linear-gradient(#fbfbfb,#ececec)"></div>
<div class="t" style="left:1551.54px;top:634px;font-size:12.4px;color:#7b7876;transform:scaleX(1.0785);">uint</div>
<svg style="position:absolute;left:1580px;top:636px" width="12" height="12"><polygon points="2.00,4.30 10.00,4.30 6.00,8.30" fill="#9c9c9c"/></svg>
<div style="position:absolute;left:1599px;top:628px;width:64px;height:27px;border:1px solid #c4c4c4;border-radius:2px;background:linear-gradient(#fbfbfb,#ececec)"></div>
<div class="t" style="left:1603.37px;top:634px;font-size:12.4px;color:#7b7876;transform:scaleX(1.0333);">None</div>
<svg style="position:absolute;left:1647px;top:636px" width="12" height="12"><polygon points="2.00,4.30 10.00,4.30 6.00,8.30" fill="#9c9c9c"/></svg>
<div class="t" style="left:1703.50px;top:633px;font-size:12.4px;color:#7b7876;transform:scaleX(0.9500);">1</div>
<div class="t" style="left:1743.93px;top:633px;font-size:12.4px;color:#7b7876;transform:scaleX(0.9500);">0</div>
<div style="position:absolute;left:1901px;top:641px;width:10px;height:2px;background:#8c8c8c"></div>
<div style="position:absolute;left:1224px;top:658px;width:700px;height:29px;background:#ffffff"></div>
<div style="position:absolute;left:1206px;top:658px;width:17px;height:29px;background:linear-gradient(#fbfbfb,#ececec)"></div>
<div style="position:absolute;left:1206px;top:687px;width:718px;height:1px;background:#c9c9c9"></div>
<div style="position:absolute;left:1206px;top:687px;width:18px;height:1px;background:#c2c2c2"></div>
<div class="t" style="left:1208.12px;top:664px;font-size:12.4px;color:#000;transform:scaleX(0.9500);">5</div>
<div class="t" style="left:1226.69px;top:663px;font-size:12.4px;color:#7b7876;transform:scaleX(0.9355);">SAPPAngleControlStat3</div>
<div class="t" style="left:1372.50px;top:663px;font-size:12.4px;color:#7b7876;transform:scaleX(0.9500);">12</div>
<div class="t" style="left:1407.50px;top:663px;font-size:12.4px;color:#7b7876;transform:scaleX(0.9500);">1</div>
<div style="position:absolute;left:1448px;top:658px;width:96px;height:27px;border:1px solid #c4c4c4;border-radius:2px;background:linear-gradient(#fbfbfb,#ececec)"></div>
<div class="t" style="left:1452.37px;top:664px;font-size:12.4px;color:#7b7876;transform:scaleX(1.0277);">Big Endian</div>
<svg style="position:absolute;left:1528px;top:666px" width="12" height="12"><polygon points="2.00,4.30 10.00,4.30 6.00,8.30" fill="#9c9c9c"/></svg>
<div style="position:absolute;left:1547px;top:658px;width:49px;height:27px;border:1px solid #c4c4c4;border-radius:2px;background:linear-gradient(#fbfbfb,#ececec)"></div>
<div class="t" style="left:1551.54px;top:664px;font-size:12.4px;color:#7b7876;transform:scaleX(1.0785);">uint</div>
<svg style="position:absolute;left:1580px;top:666px" width="12" height="12"><polygon points="2.00,4.30 10.00,4.30 6.00,8.30" fill="#9c9c9c"/></svg>
<div style="position:absolute;left:1599px;top:658px;width:64px;height:27px;border:1px solid #c4c4c4;border-radius:2px;background:linear-gradient(#fbfbfb,#ececec)"></div>
<div class="t" style="left:1603.37px;top:664px;font-size:12.4px;color:#7b7876;transform:scaleX(1.0333);">None</div>
<svg style="position:absolute;left:1647px;top:666px" width="12" height="12"><polygon points="2.00,4.30 10.00,4.30 6.00,8.30" fill="#9c9c9c"/></svg>
<div class="t" style="left:1703.50px;top:663px;font-size:12.4px;color:#7b7876;transform:scaleX(0.9500);">1</div>
<div class="t" style="left:1743.93px;top:663px;font-size:12.4px;color:#7b7876;transform:scaleX(0.9500);">0</div>
<div style="position:absolute;left:1901px;top:671px;width:10px;height:2px;background:#8c8c8c"></div>
<div style="position:absolute;left:1224px;top:688px;width:700px;height:29px;background:#e8e6e3"></div>
<div style="position:absolute;left:1206px;top:688px;width:17px;height:29px;background:linear-gradient(#fbfbfb,#ececec)"></div>
<div style="position:absolute;left:1206px;top:717px;width:718px;height:1px;background:#c9c9c9"></div>
<div style="position:absolute;left:1206px;top:717px;width:18px;height:1px;background:#c2c2c2"></div>
<div class="t" style="left:1208.03px;top:694px;font-size:12.4px;color:#000;transform:scaleX(0.9500);">6</div>
<div class="t" style="left:1226.68px;top:693px;font-size:12.4px;color:#7b7876;transform:scaleX(0.9389);">SAPPAngleControlStat2</div>
<div class="t" style="left:1372.50px;top:693px;font-size:12.4px;color:#7b7876;transform:scaleX(0.9500);">11</div>
<div class="t" style="left:1407.50px;top:693px;font-size:12.4px;color:#7b7876;transform:scaleX(0.9500);">1</div>
<div style="position:absolute;left:1448px;top:688px;width:96px;height:27px;border:1px solid #c4c4c4;border-radius:2px;background:linear-gradient(#fbfbfb,#ececec)"></div>
<div class="t" style="left:1452.37px;top:694px;font-size:12.4px;color:#7b7876;transform:scaleX(1.0277);">Big Endian</div>
<svg style="position:absolute;left:1528px;top:696px" width="12" height="12"><polygon points="2.00,4.30 10.00,4.30 6.00,8.30" fill="#9c9c9c"/></svg>
<div style="position:absolute;left:1547px;top:688px;width:49px;height:27px;border:1px solid #c4c4c4;border-radius:2px;background:linear-gradient(#fbfbfb,#ececec)"></div>
<div class="t" style="left:1551.54px;top:694px;font-size:12.4px;color:#7b7876;transform:scaleX(1.0785);">uint</div>
<svg style="position:absolute;left:1580px;top:696px" width="12" height="12"><polygon points="2.00,4.30 10.00,4.30 6.00,8.30" fill="#9c9c9c"/></svg>
<div style="position:absolute;left:1599px;top:688px;width:64px;height:27px;border:1px solid #c4c4c4;border-radius:2px;background:linear-gradient(#fbfbfb,#ececec)"></div>
<div class="t" style="left:1603.37px;top:694px;font-size:12.4px;color:#7b7876;transform:scaleX(1.0333);">None</div>
<svg style="position:absolute;left:1647px;top:696px" width="12" height="12"><polygon points="2.00,4.30 10.00,4.30 6.00,8.30" fill="#9c9c9c"/></svg>
<div class="t" style="left:1703.50px;top:693px;font-size:12.4px;color:#7b7876;transform:scaleX(0.9500);">1</div>
<div class="t" style="left:1743.93px;top:693px;font-size:12.4px;color:#7b7876;transform:scaleX(0.9500);">0</div>
<div style="position:absolute;left:1901px;top:701px;width:10px;height:2px;background:#8c8c8c"></div>
<div style="position:absolute;left:1224px;top:718px;width:700px;height:29px;background:#ffffff"></div>
<div style="position:absolute;left:1206px;top:718px;width:17px;height:29px;background:linear-gradient(#fbfbfb,#ececec)"></div>
<div style="position:absolute;left:1206px;top:747px;width:718px;height:1px;background:#c9c9c9"></div>
<div style="position:absolute;left:1206px;top:747px;width:18px;height:1px;background:#c2c2c2"></div>
<div class="t" style="left:1207.98px;top:724px;font-size:12.4px;color:#000;transform:scaleX(0.9500);">7</div>
<div class="t" style="left:1227.38px;top:723px;font-size:12.4px;color:#7b7876;transform:scaleX(0.8195);">EPAS_FAILURE</div>
<div class="t" style="left:1372.83px;top:723px;font-size:12.4px;color:#7b7876;transform:scaleX(0.9500);">9</div>
<div class="t" style="left:1407.83px;top:723px;font-size:12.4px;color:#7b7876;transform:scaleX(0.9500);">2</div>
<div style="position:absolute;left:1448px;top:718px;width:96px;height:27px;border:1px solid #c4c4c4;border-radius:2px;background:linear-gradient(#fbfbfb,#ececec)"></div>
<div class="t" style="left:1452.37px;top:724px;font-size:12.4px;color:#7b7876;transform:scaleX(1.0277);">Big Endian</div>
<svg style="position:absolute;left:1528px;top:726px" width="12" height="12"><polygon points="2.00,4.30 10.00,4.30 6.00,8.30" fill="#9c9c9c"/></svg>
<div style="position:absolute;left:1547px;top:718px;width:49px;height:27px;border:1px solid #c4c4c4;border-radius:2px;background:linear-gradient(#fbfbfb,#ececec)"></div>
<div class="t" style="left:1551.54px;top:724px;font-size:12.4px;color:#7b7876;transform:scaleX(1.0785);">uint</div>
<svg style="position:absolute;left:1580px;top:726px" width="12" height="12"><polygon points="2.00,4.30 10.00,4.30 6.00,8.30" fill="#9c9c9c"/></svg>
<div style="position:absolute;left:1599px;top:718px;width:64px;height:27px;border:1px solid #c4c4c4;border-radius:2px;background:linear-gradient(#fbfbfb,#ececec)"></div>
<div class="t" style="left:1603.37px;top:724px;font-size:12.4px;color:#7b7876;transform:scaleX(1.0333);">None</div>
<svg style="position:absolute;left:1647px;top:726px" width="12" height="12"><polygon points="2.00,4.30 10.00,4.30 6.00,8.30" fill="#9c9c9c"/></svg>
<div class="t" style="left:1703.50px;top:723px;font-size:12.4px;color:#7b7876;transform:scaleX(0.9500);">1</div>
<div class="t" style="left:1743.93px;top:723px;font-size:12.4px;color:#7b7876;transform:scaleX(0.9500);">0</div>
<div style="position:absolute;left:1901px;top:731px;width:10px;height:2px;background:#8c8c8c"></div>
<div style="position:absolute;left:1224px;top:748px;width:700px;height:29px;background:#e8e6e3"></div>
<div style="position:absolute;left:1206px;top:748px;width:17px;height:29px;background:linear-gradient(#fbfbfb,#ececec)"></div>
<div style="position:absolute;left:1206px;top:777px;width:718px;height:1px;background:#c9c9c9"></div>
<div style="position:absolute;left:1206px;top:777px;width:18px;height:1px;background:#c2c2c2"></div>
<div class="t" style="left:1208.08px;top:754px;font-size:12.4px;color:#000;transform:scaleX(0.9500);">8</div>
<div class="t" style="left:1226.69px;top:753px;font-size:12.4px;color:#7b7876;transform:scaleX(0.9320);">SAPPAngleControlStat1</div>
<div class="t" style="left:1372.83px;top:753px;font-size:12.4px;color:#7b7876;transform:scaleX(0.9500);">23</div>
<div class="t" style="left:1407.83px;top:753px;font-size:12.4px;color:#7b7876;transform:scaleX(0.9500);">2</div>
<div style="position:absolute;left:1448px;top:748px;width:96px;height:27px;border:1px solid #c4c4c4;border-radius:2px;background:linear-gradient(#fbfbfb,#ececec)"></div>
<div class="t" style="left:1452.37px;top:754px;font-size:12.4px;color:#7b7876;transform:scaleX(1.0277);">Big Endian</div>
<svg style="position:absolute;left:1528px;top:756px" width="12" height="12"><polygon points="2.00,4.30 10.00,4.30 6.00,8.30" fill="#9c9c9c"/></svg>
<div style="position:absolute;left:1547px;top:748px;width:49px;height:27px;border:1px solid #c4c4c4;border-radius:2px;background:linear-gradient(#fbfbfb,#ececec)"></div>
<div class="t" style="left:1551.54px;top:754px;font-size:12.4px;color:#7b7876;transform:scaleX(1.0785);">uint</div>
<svg style="position:absolute;left:1580px;top:756px" width="12" height="12"><polygon points="2.00,4.30 10.00,4.30 6.00,8.30" fill="#9c9c9c"/></svg>
<div style="position:absolute;left:1599px;top:748px;width:64px;height:27px;border:1px solid #c4c4c4;border-radius:2px;background:linear-gradient(#fbfbfb,#ececec)"></div>
<div class="t" style="left:1603.37px;top:754px;font-size:12.4px;color:#7b7876;transform:scaleX(1.0333);">None</div>
<svg style="position:absolute;left:1647px;top:756px" width="12" height="12"><polygon points="2.00,4.30 10.00,4.30 6.00,8.30" fill="#9c9c9c"/></svg>
<div class="t" style="left:1703.50px;top:753px;font-size:12.4px;color:#7b7876;transform:scaleX(0.9500);">1</div>
<div class="t" style="left:1743.93px;top:753px;font-size:12.4px;color:#7b7876;transform:scaleX(0.9500);">0</div>
<div style="position:absolute;left:1901px;top:761px;width:10px;height:2px;background:#8c8c8c"></div>
<div style="position:absolute;left:1224px;top:778px;width:700px;height:29px;background:#ffffff"></div>
<div style="position:absolute;left:1206px;top:778px;width:17px;height:29px;background:linear-gradient(#fbfbfb,#ececec)"></div>
<div style="position:absolute;left:1206px;top:807px;width:718px;height:1px;background:#c9c9c9"></div>
<div style="position:absolute;left:1206px;top:807px;width:18px;height:1px;background:#c2c2c2"></div>
<div class="t" style="left:1208.03px;top:784px;font-size:12.4px;color:#000;transform:scaleX(0.9500);">9</div>
<div class="t" style="left:1226.71px;top:783px;font-size:12.4px;color:#7b7876;transform:scaleX(0.8861);">SteMdule_I_Est</div>
<div class="t" style="left:1372.83px;top:783px;font-size:12.4px;color:#7b7876;transform:scaleX(0.9500);">21</div>
<div class="t" style="left:1407.50px;top:783px;font-size:12.4px;color:#7b7876;transform:scaleX(0.9500);">12</div>
<div style="position:absolute;left:1448px;top:778px;width:96px;height:27px;border:1px solid #c4c4c4;border-radius:2px;background:linear-gradient(#fbfbfb,#ececec)"></div>
<div class="t" style="left:1452.37px;top:784px;font-size:12.4px;color:#7b7876;transform:scaleX(1.0277);">Big Endian</div>
<svg style="position:absolute;left:1528px;top:786px" width="12" height="12"><polygon points="2.00,4.30 10.00,4.30 6.00,8.30" fill="#9c9c9c"/></svg>
<div style="position:absolute;left:1547px;top:778px;width:49px;height:27px;border:1px solid #c4c4c4;border-radius:2px;background:linear-gradient(#fbfbfb,#ececec)"></div>
<div class="t" style="left:1551.54px;top:784px;font-size:12.4px;color:#7b7876;transform:scaleX(1.0785);">uint</div>
<svg style="position:absolute;left:1580px;top:786px" width="12" height="12"><polygon points="2.00,4.30 10.00,4.30 6.00,8.30" fill="#9c9c9c"/></svg>
<div style="position:absolute;left:1599px;top:778px;width:64px;height:27px;border:1px solid #c4c4c4;border-radius:2px;background:linear-gradient(#fbfbfb,#ececec)"></div>
<div class="t" style="left:1603.37px;top:784px;font-size:12.4px;color:#7b7876;transform:scaleX(1.0333);">None</div>
<svg style="position:absolute;left:1647px;top:786px" width="12" height="12"><polygon points="2.00,4.30 10.00,4.30 6.00,8.30" fill="#9c9c9c"/></svg>
<div class="t" style="left:1703.94px;top:783px;font-size:12.4px;color:#7b7876;transform:scaleX(0.9201);">0.05</div>
<div class="t" style="left:1743.88px;top:783px;font-size:12.4px;color:#7b7876;transform:scaleX(0.9449);">-64.0</div>
<div class="t" style="left:1854.35px;top:783px;font-size:12.4px;color:#7b7876;transform:scaleX(0.9778);">Amps</div>
<div style="position:absolute;left:1901px;top:791px;width:10px;height:2px;background:#8c8c8c"></div>
<div style="position:absolute;left:1224px;top:808px;width:700px;height:29px;background:#e8e6e3"></div>
<div style="position:absolute;left:1206px;top:808px;width:17px;height:29px;background:linear-gradient(#fbfbfb,#ececec)"></div>
<div style="position:absolute;left:1206px;top:837px;width:718px;height:1px;background:#c9c9c9"></div>
<div style="position:absolute;left:1206px;top:837px;width:18px;height:1px;background:#c2c2c2"></div>
<div class="t" style="left:1208.10px;top:814px;font-size:12.4px;color:#000;transform:scaleX(0.9500);">10</div>
<div class="t" style="left:1226.70px;top:813px;font-size:12.4px;color:#7b7876;transform:scaleX(0.9095);">SteMdule_U_Meas</div>
<div class="t" style="left:1372.97px;top:813px;font-size:12.4px;color:#7b7876;transform:scaleX(0.9500);">39</div>
<div class="t" style="left:1407.88px;top:813px;font-size:12.4px;color:#7b7876;transform:scaleX(0.9500);">8</div>
<div style="position:absolute;left:1448px;top:808px;width:96px;height:27px;border:1px solid #c4c4c4;border-radius:2px;background:linear-gradient(#fbfbfb,#ececec)"></div>
<div class="t" style="left:1452.37px;top:814px;font-size:12.4px;color:#7b7876;transform:scaleX(1.0277);">Big Endian</div>
<svg style="position:absolute;left:1528px;top:816px" width="12" height="12"><polygon points="2.00,4.30 10.00,4.30 6.00,8.30" fill="#9c9c9c"/></svg>
<div style="position:absolute;left:1547px;top:808px;width:49px;height:27px;border:1px solid #c4c4c4;border-radius:2px;background:linear-gradient(#fbfbfb,#ececec)"></div>
<div class="t" style="left:1551.54px;top:814px;font-size:12.4px;color:#7b7876;transform:scaleX(1.0785);">uint</div>
<svg style="position:absolute;left:1580px;top:816px" width="12" height="12"><polygon points="2.00,4.30 10.00,4.30 6.00,8.30" fill="#9c9c9c"/></svg>
<div style="position:absolute;left:1599px;top:808px;width:64px;height:27px;border:1px solid #c4c4c4;border-radius:2px;background:linear-gradient(#fbfbfb,#ececec)"></div>
<div class="t" style="left:1603.37px;top:814px;font-size:12.4px;color:#7b7876;transform:scaleX(1.0333);">None</div>
<svg style="position:absolute;left:1647px;top:816px" width="12" height="12"><polygon points="2.00,4.30 10.00,4.30 6.00,8.30" fill="#9c9c9c"/></svg>
<div class="t" style="left:1703.94px;top:813px;font-size:12.4px;color:#7b7876;transform:scaleX(0.9201);">0.05</div>
<div class="t" style="left:1743.86px;top:813px;font-size:12.4px;color:#7b7876;transform:scaleX(0.9040);">6.0</div>
<div class="t" style="left:1854.35px;top:813px;font-size:12.4px;color:#7b7876;transform:scaleX(0.9280);">Volts</div>
<div style="position:absolute;left:1901px;top:821px;width:10px;height:2px;background:#8c8c8c"></div>
<div style="position:absolute;left:1223px;top:538px;width:1px;height:300px;background:#c9c9c9"></div>
<div style="position:absolute;left:1369px;top:538px;width:1px;height:300px;background:#c9c9c9"></div>
<div style="position:absolute;left:1404px;top:538px;width:1px;height:300px;background:#c9c9c9"></div>
<div style="position:absolute;left:1447px;top:538px;width:1px;height:300px;background:#c9c9c9"></div>
<div style="position:absolute;left:1546px;top:538px;width:1px;height:300px;background:#c9c9c9"></div>
<div style="position:absolute;left:1598px;top:538px;width:1px;height:300px;background:#c9c9c9"></div>
<div style="position:absolute;left:1665px;top:538px;width:1px;height:300px;background:#c9c9c9"></div>
<div style="position:absolute;left:1700px;top:538px;width:1px;height:300px;background:#c9c9c9"></div>
<div style="position:absolute;left:1740px;top:538px;width:1px;height:300px;background:#c9c9c9"></div>
<div style="position:absolute;left:1780px;top:538px;width:1px;height:300px;background:#c9c9c9"></div>
<div style="position:absolute;left:1815px;top:538px;width:1px;height:300px;background:#c9c9c9"></div>
<div style="position:absolute;left:1850px;top:538px;width:1px;height:300px;background:#c9c9c9"></div>
<div style="position:absolute;left:1888px;top:538px;width:1px;height:300px;background:#c9c9c9"></div>
<div style="position:absolute;left:1223px;top:538px;width:1px;height:300px;background:#bdbdbd"></div>
<div style="position:absolute;left:1936px;top:665px;width:1px;height:1px;background:#a8a8a8"></div>
<div style="position:absolute;left:1936px;top:668px;width:1px;height:1px;background:#a8a8a8"></div>
<div style="position:absolute;left:1936px;top:671px;width:1px;height:1px;background:#a8a8a8"></div>
<div style="position:absolute;left:1936px;top:674px;width:1px;height:1px;background:#a8a8a8"></div>
<div style="position:absolute;left:1936px;top:677px;width:1px;height:1px;background:#a8a8a8"></div>
<div style="position:absolute;left:1936px;top:680px;width:1px;height:1px;background:#a8a8a8"></div>
<div style="position:absolute;left:1947px;top:539px;width:294px;height:235px;background:#fff;border:1px solid #b9b9b9;box-sizing:border-box"></div>
<div style="position:absolute;left:1948px;top:540px;width:292px;height:18px;background:linear-gradient(#fbfbfb,#ececec)"></div>
<div style="position:absolute;left:1948px;top:558px;width:292px;height:1px;background:#b9b9b9"></div>
<div style="position:absolute;left:1948px;top:559px;width:11px;height:214px;background:#f0f0f0"></div>
<div class="t" style="left:1973.00px;top:540px;font-size:12.4px;color:#000;transform:scaleX(0.9500);">7</div>
<div style="position:absolute;left:1993px;top:540px;width:1px;height:18px;background:#d3d3d3"></div>
<div class="t" style="left:2008.00px;top:540px;font-size:12.4px;color:#000;transform:scaleX(0.9500);">6</div>
<div style="position:absolute;left:2028px;top:540px;width:1px;height:18px;background:#d3d3d3"></div>
<div class="t" style="left:2043.02px;top:540px;font-size:12.4px;color:#000;transform:scaleX(0.9500);">5</div>
<div style="position:absolute;left:2063px;top:540px;width:1px;height:18px;background:#d3d3d3"></div>
<div class="t" style="left:2078.05px;top:540px;font-size:12.4px;color:#000;transform:scaleX(0.9500);">4</div>
<div style="position:absolute;left:2098px;top:540px;width:1px;height:18px;background:#d3d3d3"></div>
<div class="t" style="left:2113.07px;top:540px;font-size:12.4px;color:#000;transform:scaleX(0.9500);">3</div>
<div style="position:absolute;left:2133px;top:540px;width:1px;height:18px;background:#d3d3d3"></div>
<div class="t" style="left:2148.02px;top:540px;font-size:12.4px;color:#000;transform:scaleX(0.9500);">2</div>
<div style="position:absolute;left:2168px;top:540px;width:1px;height:18px;background:#d3d3d3"></div>
<div class="t" style="left:2182.86px;top:540px;font-size:12.4px;color:#000;transform:scaleX(0.9500);">1</div>
<div style="position:absolute;left:2203px;top:540px;width:1px;height:18px;background:#d3d3d3"></div>
<div class="t" style="left:2218.02px;top:540px;font-size:12.4px;color:#000;transform:scaleX(0.9500);">0</div>
<div style="position:absolute;left:1948px;top:559px;width:10px;height:24px;background:linear-gradient(#fbfbfb,#ececec)"></div>
<div class="t" style="left:1949.92px;top:562px;font-size:12.4px;color:#000;transform:scaleX(0.9500);">0</div>
<div style="position:absolute;left:1959px;top:559px;width:34px;height:24px;background:#6b8e5f"></div>
<div class="t" style="left:1961.70px;top:562px;font-size:12.4px;color:#000;transform:scaleX(0.9500);">1</div>
<div style="position:absolute;left:1994px;top:559px;width:34px;height:24px;background:#6b8e5f"></div>
<div class="t" style="left:1996.70px;top:562px;font-size:12.4px;color:#000;transform:scaleX(0.9500);">1</div>
<div style="position:absolute;left:2029px;top:559px;width:34px;height:24px;background:#6b8e5f"></div>
<div class="t" style="left:2031.70px;top:562px;font-size:12.4px;color:#000;transform:scaleX(0.9500);">1</div>
<div style="position:absolute;left:2064px;top:559px;width:34px;height:24px;background:#6b8e5f"></div>
<div class="t" style="left:2066.70px;top:562px;font-size:12.4px;color:#000;transform:scaleX(0.9500);">1</div>
<div style="position:absolute;left:2099px;top:559px;width:34px;height:24px;background:#6b8e5f"></div>
<div class="t" style="left:2101.70px;top:562px;font-size:12.4px;color:#000;transform:scaleX(0.9500);">1</div>
<div style="position:absolute;left:2134px;top:559px;width:34px;height:24px;background:#6b8e5f"></div>
<div class="t" style="left:2136.70px;top:562px;font-size:12.4px;color:#000;transform:scaleX(0.9500);">1</div>
<div style="position:absolute;left:2169px;top:559px;width:34px;height:24px;background:#6b8e5f"></div>
<div class="t" style="left:2171.70px;top:562px;font-size:12.4px;color:#000;transform:scaleX(0.9500);">1</div>
<div style="position:absolute;left:2204px;top:559px;width:34px;height:24px;background:#6b8e5f"></div>
<div class="t" style="left:2206.70px;top:562px;font-size:12.4px;color:#000;transform:scaleX(0.9500);">1</div>
<div style="position:absolute;left:1948px;top:583px;width:292px;height:1px;background:#c9c9c9"></div>
<div style="position:absolute;left:1948px;top:583px;width:11px;height:1px;background:#c2c2c2"></div>
<div style="position:absolute;left:1948px;top:584px;width:10px;height:24px;background:linear-gradient(#fbfbfb,#ececec)"></div>
<div class="t" style="left:1949.76px;top:587px;font-size:12.4px;color:#000;transform:scaleX(0.9500);">1</div>
<div style="position:absolute;left:1959px;top:584px;width:34px;height:24px;background:#20ff66"></div>
<div class="t" style="left:1962.03px;top:587px;font-size:12.4px;color:#000;transform:scaleX(0.9500);">2</div>
<div style="position:absolute;left:1994px;top:584px;width:34px;height:24px;background:#1a75ff"></div>
<div class="t" style="left:1997.17px;top:587px;font-size:12.4px;color:#000;transform:scaleX(0.9500);">3</div>
<div style="position:absolute;left:2029px;top:584px;width:34px;height:24px;background:#c862d8"></div>
<div class="t" style="left:2032.31px;top:587px;font-size:12.4px;color:#000;transform:scaleX(0.9500);">4</div>
<div style="position:absolute;left:2064px;top:584px;width:34px;height:24px;background:#0b3044"></div>
<div class="t" style="left:2067.12px;top:587px;font-size:12.4px;color:#000;transform:scaleX(0.9500);">5</div>
<div style="position:absolute;left:2099px;top:584px;width:34px;height:24px;background:#c4c28c"></div>
<div class="t" style="left:2102.03px;top:587px;font-size:12.4px;color:#000;transform:scaleX(0.9500);">6</div>
<div style="position:absolute;left:2169px;top:584px;width:34px;height:24px;background:#c02a10"></div>
<div class="t" style="left:2171.98px;top:587px;font-size:12.4px;color:#000;transform:scaleX(0.9500);">7</div>
<div style="position:absolute;left:2204px;top:584px;width:34px;height:24px;background:#c02a10"></div>
<div class="t" style="left:2206.98px;top:587px;font-size:12.4px;color:#000;transform:scaleX(0.9500);">7</div>
<div style="position:absolute;left:1948px;top:608px;width:292px;height:1px;background:#c9c9c9"></div>
<div style="position:absolute;left:1948px;top:608px;width:11px;height:1px;background:#c2c2c2"></div>
<div style="position:absolute;left:1948px;top:609px;width:10px;height:24px;background:linear-gradient(#fbfbfb,#ececec)"></div>
<div class="t" style="left:1949.92px;top:612px;font-size:12.4px;color:#000;transform:scaleX(0.9500);">2</div>
<div style="position:absolute;left:1959px;top:609px;width:34px;height:24px;background:#6e5244"></div>
<div class="t" style="left:1962.08px;top:612px;font-size:12.4px;color:#000;transform:scaleX(0.9500);">8</div>
<div style="position:absolute;left:1994px;top:609px;width:34px;height:24px;background:#6e5244"></div>
<div class="t" style="left:1997.08px;top:612px;font-size:12.4px;color:#000;transform:scaleX(0.9500);">8</div>
<div style="position:absolute;left:2029px;top:609px;width:34px;height:24px;background:#1ee455"></div>
<div class="t" style="left:2032.03px;top:612px;font-size:12.4px;color:#000;transform:scaleX(0.9500);">9</div>
<div style="position:absolute;left:2064px;top:609px;width:34px;height:24px;background:#1ee455"></div>
<div class="t" style="left:2067.03px;top:612px;font-size:12.4px;color:#000;transform:scaleX(0.9500);">9</div>
<div style="position:absolute;left:2099px;top:609px;width:34px;height:24px;background:#1ee455"></div>
<div class="t" style="left:2102.03px;top:612px;font-size:12.4px;color:#000;transform:scaleX(0.9500);">9</div>
<div style="position:absolute;left:2134px;top:609px;width:34px;height:24px;background:#1ee455"></div>
<div class="t" style="left:2137.03px;top:612px;font-size:12.4px;color:#000;transform:scaleX(0.9500);">9</div>
<div style="position:absolute;left:2169px;top:609px;width:34px;height:24px;background:#1ee455"></div>
<div class="t" style="left:2172.03px;top:612px;font-size:12.4px;color:#000;transform:scaleX(0.9500);">9</div>
<div style="position:absolute;left:2204px;top:609px;width:34px;height:24px;background:#1ee455"></div>
<div class="t" style="left:2207.03px;top:612px;font-size:12.4px;color:#000;transform:scaleX(0.9500);">9</div>
<div style="position:absolute;left:1948px;top:633px;width:292px;height:1px;background:#c9c9c9"></div>
<div style="position:absolute;left:1948px;top:633px;width:11px;height:1px;background:#c2c2c2"></div>
<div style="position:absolute;left:1948px;top:634px;width:10px;height:24px;background:linear-gradient(#fbfbfb,#ececec)"></div>
<div class="t" style="left:1949.97px;top:637px;font-size:12.4px;color:#000;transform:scaleX(0.9500);">3</div>
<div style="position:absolute;left:1959px;top:634px;width:34px;height:24px;background:#1ee455"></div>
<div class="t" style="left:1962.03px;top:637px;font-size:12.4px;color:#000;transform:scaleX(0.9500);">9</div>
<div style="position:absolute;left:1994px;top:634px;width:34px;height:24px;background:#1ee455"></div>
<div class="t" style="left:1997.03px;top:637px;font-size:12.4px;color:#000;transform:scaleX(0.9500);">9</div>
<div style="position:absolute;left:2029px;top:634px;width:34px;height:24px;background:#1ee455"></div>
<div class="t" style="left:2032.03px;top:637px;font-size:12.4px;color:#000;transform:scaleX(0.9500);">9</div>
<div style="position:absolute;left:2064px;top:634px;width:34px;height:24px;background:#1ee455"></div>
<div class="t" style="left:2067.03px;top:637px;font-size:12.4px;color:#000;transform:scaleX(0.9500);">9</div>
<div style="position:absolute;left:2099px;top:634px;width:34px;height:24px;background:#1ee455"></div>
<div class="t" style="left:2102.03px;top:637px;font-size:12.4px;color:#000;transform:scaleX(0.9500);">9</div>
<div style="position:absolute;left:2134px;top:634px;width:34px;height:24px;background:#1ee455"></div>
<div class="t" style="left:2137.03px;top:637px;font-size:12.4px;color:#000;transform:scaleX(0.9500);">9</div>
<div style="position:absolute;left:1948px;top:658px;width:292px;height:1px;background:#c9c9c9"></div>
<div style="position:absolute;left:1948px;top:658px;width:11px;height:1px;background:#c2c2c2"></div>
<div style="position:absolute;left:1948px;top:659px;width:10px;height:24px;background:linear-gradient(#fbfbfb,#ececec)"></div>
<div class="t" style="left:1949.95px;top:662px;font-size:12.4px;color:#000;transform:scaleX(0.9500);">4</div>
<div style="position:absolute;left:1959px;top:659px;width:34px;height:24px;background:#5a4fcf"></div>
<div class="t" style="left:1961.70px;top:662px;font-size:12.4px;color:#000;transform:scaleX(0.9500);">10</div>
<div style="position:absolute;left:1994px;top:659px;width:34px;height:24px;background:#5a4fcf"></div>
<div class="t" style="left:1996.70px;top:662px;font-size:12.4px;color:#000;transform:scaleX(0.9500);">10</div>
<div style="position:absolute;left:2029px;top:659px;width:34px;height:24px;background:#5a4fcf"></div>
<div class="t" style="left:2031.70px;top:662px;font-size:12.4px;color:#000;transform:scaleX(0.9500);">10</div>
<div style="position:absolute;left:2064px;top:659px;width:34px;height:24px;background:#5a4fcf"></div>
<div class="t" style="left:2066.70px;top:662px;font-size:12.4px;color:#000;transform:scaleX(0.9500);">10</div>
<div style="position:absolute;left:2099px;top:659px;width:34px;height:24px;background:#5a4fcf"></div>
<div class="t" style="left:2101.70px;top:662px;font-size:12.4px;color:#000;transform:scaleX(0.9500);">10</div>
<div style="position:absolute;left:2134px;top:659px;width:34px;height:24px;background:#5a4fcf"></div>
<div class="t" style="left:2136.70px;top:662px;font-size:12.4px;color:#000;transform:scaleX(0.9500);">10</div>
<div style="position:absolute;left:2169px;top:659px;width:34px;height:24px;background:#5a4fcf"></div>
<div class="t" style="left:2171.70px;top:662px;font-size:12.4px;color:#000;transform:scaleX(0.9500);">10</div>
<div style="position:absolute;left:2204px;top:659px;width:34px;height:24px;background:#5a4fcf"></div>
<div class="t" style="left:2206.70px;top:662px;font-size:12.4px;color:#000;transform:scaleX(0.9500);">10</div>
<div style="position:absolute;left:1948px;top:683px;width:292px;height:1px;background:#c9c9c9"></div>
<div style="position:absolute;left:1948px;top:683px;width:11px;height:1px;background:#c2c2c2"></div>
<div style="position:absolute;left:1948px;top:684px;width:10px;height:24px;background:linear-gradient(#fbfbfb,#ececec)"></div>
<div class="t" style="left:1949.92px;top:687px;font-size:12.4px;color:#000;transform:scaleX(0.9500);">5</div>
<div style="position:absolute;left:1948px;top:708px;width:292px;height:1px;background:#c9c9c9"></div>
<div style="position:absolute;left:1948px;top:708px;width:11px;height:1px;background:#c2c2c2"></div>
<div style="position:absolute;left:1948px;top:709px;width:10px;height:24px;background:linear-gradient(#fbfbfb,#ececec)"></div>
<div class="t" style="left:1949.90px;top:712px;font-size:12.4px;color:#000;transform:scaleX(0.9500);">6</div>
<div style="position:absolute;left:1948px;top:733px;width:292px;height:1px;background:#c9c9c9"></div>
<div style="position:absolute;left:1948px;top:733px;width:11px;height:1px;background:#c2c2c2"></div>
<div style="position:absolute;left:1948px;top:734px;width:10px;height:24px;background:linear-gradient(#fbfbfb,#ececec)"></div>
<div class="t" style="left:1949.90px;top:737px;font-size:12.4px;color:#000;transform:scaleX(0.9500);">7</div>
<div style="position:absolute;left:1948px;top:758px;width:292px;height:1px;background:#c9c9c9"></div>
<div style="position:absolute;left:1948px;top:758px;width:11px;height:1px;background:#c2c2c2"></div>
<div style="position:absolute;left:1958px;top:559px;width:1px;height:200px;background:#bdbdbd"></div>
<div style="position:absolute;left:1993px;top:559px;width:1px;height:200px;background:#c9c9c9"></div>
<div style="position:absolute;left:2028px;top:559px;width:1px;height:200px;background:#c9c9c9"></div>
<div style="position:absolute;left:2063px;top:559px;width:1px;height:200px;background:#c9c9c9"></div>
<div style="position:absolute;left:2098px;top:559px;width:1px;height:200px;background:#c9c9c9"></div>
<div style="position:absolute;left:2133px;top:559px;width:1px;height:200px;background:#c9c9c9"></div>
<div style="position:absolute;left:2168px;top:559px;width:1px;height:200px;background:#c9c9c9"></div>
<div style="position:absolute;left:2203px;top:559px;width:1px;height:200px;background:#c9c9c9"></div>
<div style="position:absolute;left:2238px;top:559px;width:1px;height:200px;background:#c9c9c9"></div>
<div style="position:absolute;left:2161px;top:795px;width:78px;height:22px;border:1px solid #a3a3a3;border-radius:3px;background:linear-gradient(#fdfdfd,#eeeeee)"></div>
<div class="t" style="left:2178.13px;top:798px;font-size:12.7px;color:#000;transform:scaleX(1.0188);">Refresh</div>
<div style="position:absolute;left:2091px;top:896px;width:78px;height:22px;border:1px solid #a3a3a3;border-radius:3px;background:linear-gradient(#fdfdfd,#eeeeee)"></div>
<div class="t" style="left:2122.88px;top:899px;font-size:12.7px;color:#000;transform:scaleX(0.8750);">OK</div>
<div style="position:absolute;left:2182px;top:896px;width:78px;height:22px;border:1px solid #a3a3a3;border-radius:3px;background:linear-gradient(#fdfdfd,#eeeeee)"></div>
<div class="t" style="left:2202.77px;top:899px;font-size:12.7px;color:#000;transform:scaleX(0.9724);">Cancel</div>
</body></html>
